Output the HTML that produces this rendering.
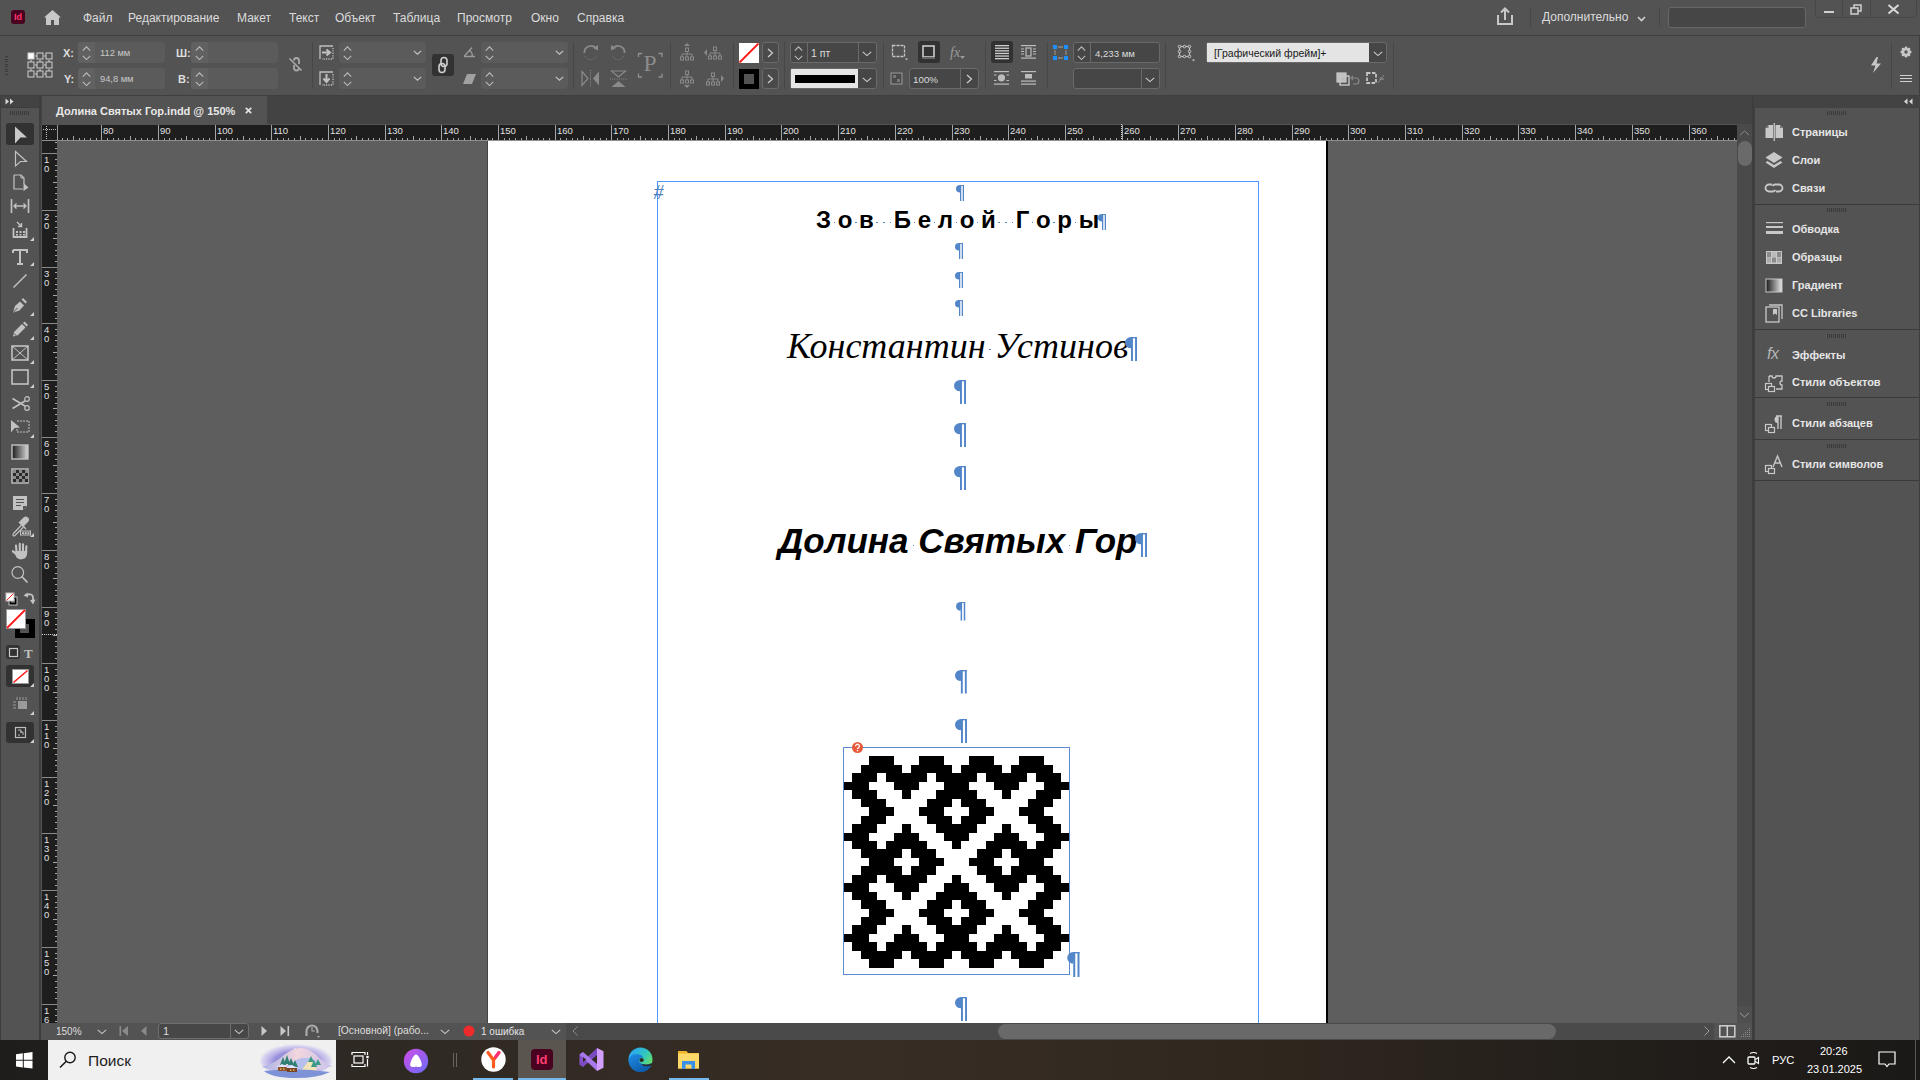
<!DOCTYPE html><html><head><meta charset="utf-8"><style>
*{box-sizing:border-box}
html,body{margin:0;padding:0}
body{width:1920px;height:1080px;overflow:hidden;position:relative;background:#535353;font-family:"Liberation Sans",sans-serif;color:#d6d6d6}
.a{position:absolute}
.t{position:absolute;white-space:nowrap;line-height:1}
svg{position:absolute;overflow:visible}
</style></head><body><div class="a" style="left:0px;top:0px;width:1920px;height:35px;background:#535353"></div><div class="a" style="left:0px;top:35px;width:1920px;height:1px;background:#3f3f3f"></div><div class="a" style="left:0px;top:36px;width:1920px;height:59px;background:#535353"></div><div class="a" style="left:0px;top:95px;width:1920px;height:1px;background:#3f3f3f"></div><div class="a" style="left:0px;top:96px;width:41px;height:944px;background:#3e3e3e"></div><div class="a" style="left:1px;top:96px;width:38px;height:11px;background:#434343"></div><div class="a" style="left:1px;top:108px;width:38px;height:932px;background:#535353"></div><div class="a" style="left:41px;top:96px;width:1713px;height:28px;background:#434343"></div><div class="a" style="left:42px;top:96px;width:225px;height:28px;background:#535353"></div><div class="a" style="left:42px;top:125px;width:1695px;height:15px;background:#1e1e1e"></div><div class="a" style="left:42px;top:140px;width:15px;height:883px;background:#1e1e1e"></div><div class="a" style="left:57px;top:141px;width:1680px;height:882px;background:#5e5e5e"></div><div class="a" style="left:488px;top:140px;width:838px;height:883px;background:#ffffff"></div><div class="a" style="left:1326px;top:140px;width:2px;height:883px;background:#000"></div><div class="a" style="left:487px;top:140px;width:1px;height:883px;background:#444"></div><div class="a" style="left:1737px;top:124px;width:15px;height:899px;background:#4a4a4a"></div><div class="a" style="left:1738px;top:141px;width:14px;height:25px;background:#6a6a6a;border-radius:7px"></div><div class="a" style="left:42px;top:1023px;width:1710px;height:17px;background:#535353"></div><div class="a" style="left:566px;top:1023px;width:1149px;height:17px;background:#4a4a4a"></div><div class="a" style="left:998px;top:1024px;width:558px;height:15px;background:#696969;border-radius:8px"></div><div class="a" style="left:1752px;top:96px;width:168px;height:944px;background:#3e3e3e"></div><div class="a" style="left:1754px;top:96px;width:166px;height:12px;background:#434343"></div><div class="a" style="left:1755px;top:108px;width:164px;height:932px;background:#535353"></div><div class="a" style="left:0px;top:1040px;width:1920px;height:40px;background:linear-gradient(90deg,#1e1d1c 0%,#211f1d 3%,#2e2923 18%,#372d24 45%,#30281f 65%,#221e1a 85%,#1b1917 100%)"></div><div class="a" style="left:48px;top:1040px;width:288px;height:40px;background:#f0f0f0"></div><div class="a" style="left:11px;top:10px;width:14px;height:14px;background:#49021f;border-radius:3px"></div><div class="t" style="left:14px;top:12.58px;font-size:9px;color:#ff3a6e;font-weight:bold">Id</div><svg style="left:43px;top:9px;" width="19" height="17" viewBox="0 0 19 17"><path d="M9.5 1 L1 8.5 L3 8.5 L3 16 L8 16 L8 11 L11 11 L11 16 L16 16 L16 8.5 L18 8.5 Z" fill="#c8c8c8"/></svg><div class="t" style="left:83px;top:11.84px;font-size:12px;color:#dcdcdc;">Файл</div><div class="t" style="left:128px;top:11.84px;font-size:12px;color:#dcdcdc;">Редактирование</div><div class="t" style="left:237px;top:11.84px;font-size:12px;color:#dcdcdc;">Макет</div><div class="t" style="left:289px;top:11.84px;font-size:12px;color:#dcdcdc;">Текст</div><div class="t" style="left:335px;top:11.84px;font-size:12px;color:#dcdcdc;">Объект</div><div class="t" style="left:393px;top:11.84px;font-size:12px;color:#dcdcdc;">Таблица</div><div class="t" style="left:457px;top:11.84px;font-size:12px;color:#dcdcdc;">Просмотр</div><div class="t" style="left:531px;top:11.84px;font-size:12px;color:#dcdcdc;">Окно</div><div class="t" style="left:577px;top:11.84px;font-size:12px;color:#dcdcdc;">Справка</div><svg style="left:1496px;top:7px;" width="18" height="19" viewBox="0 0 18 19"><path d="M2 8 V17 H16 V8" fill="none" stroke="#c8c8c8" stroke-width="2"/><path d="M9 13 V2 M5 5.5 L9 1.5 L13 5.5" fill="none" stroke="#c8c8c8" stroke-width="2"/></svg><div class="a" style="left:1530px;top:7px;width:1px;height:20px;background:#474747"></div><div class="t" style="left:1542px;top:11.34px;font-size:12px;color:#dcdcdc;">Дополнительно</div><svg style="left:1637px;top:16px;" width="9" height="6" viewBox="0 0 9 6"><path d="M1 1 L4.5 4.5 L8 1" fill="none" stroke="#d0d0d0" stroke-width="1.6"/></svg><div class="a" style="left:1659px;top:7px;width:1px;height:20px;background:#474747"></div><div class="a" style="left:1668px;top:7px;width:138px;height:21px;background:#464646;border:1px solid #676767;border-radius:3px"></div><div class="a" style="left:1815px;top:-2px;width:102px;height:20px;border:1px solid #474747;border-radius:0 0 4px 4px"></div><div class="a" style="left:1842px;top:0px;width:1px;height:18px;background:#474747"></div><div class="a" style="left:1870px;top:0px;width:1px;height:18px;background:#474747"></div><div class="a" style="left:1824px;top:11px;width:10px;height:2px;background:#d0d0d0"></div><svg style="left:1850px;top:4px;" width="13" height="11" viewBox="0 0 13 11"><rect x="1" y="4" width="7" height="6" fill="none" stroke="#d0d0d0" stroke-width="1.5"/><path d="M4 4 V1 H11 V7 H8" fill="none" stroke="#d0d0d0" stroke-width="1.5"/></svg><svg style="left:1887px;top:4px;" width="13" height="10" viewBox="0 0 13 10"><path d="M1.5 1 L11.5 9.5 M11.5 1 L1.5 9.5" stroke="#d8d8d8" stroke-width="2"/></svg><div class="a" style="left:5px;top:56.0px;width:3px;height:1px;background:#3a3a3a"></div><div class="a" style="left:5px;top:58.5px;width:3px;height:1px;background:#3a3a3a"></div><div class="a" style="left:5px;top:61.0px;width:3px;height:1px;background:#3a3a3a"></div><div class="a" style="left:5px;top:63.5px;width:3px;height:1px;background:#3a3a3a"></div><div class="a" style="left:5px;top:66.0px;width:3px;height:1px;background:#3a3a3a"></div><div class="a" style="left:5px;top:68.5px;width:3px;height:1px;background:#3a3a3a"></div><div class="a" style="left:5px;top:71.0px;width:3px;height:1px;background:#3a3a3a"></div><div class="a" style="left:5px;top:73.5px;width:3px;height:1px;background:#3a3a3a"></div><svg style="left:27px;top:52px;" width="28" height="27" viewBox="0 0 28 27"><rect x="1" y="1" width="6" height="6" fill="#ffffff" stroke="#d0d0d0" stroke-width="1"/><rect x="10" y="1" width="6" height="6" fill="none" stroke="#d0d0d0" stroke-width="1"/><rect x="19" y="1" width="6" height="6" fill="none" stroke="#d0d0d0" stroke-width="1"/><rect x="1" y="10" width="6" height="6" fill="none" stroke="#d0d0d0" stroke-width="1"/><rect x="10" y="10" width="6" height="6" fill="none" stroke="#d0d0d0" stroke-width="1"/><rect x="19" y="10" width="6" height="6" fill="none" stroke="#d0d0d0" stroke-width="1"/><rect x="1" y="19" width="6" height="6" fill="none" stroke="#d0d0d0" stroke-width="1"/><rect x="10" y="19" width="6" height="6" fill="none" stroke="#d0d0d0" stroke-width="1"/><rect x="19" y="19" width="6" height="6" fill="none" stroke="#d0d0d0" stroke-width="1"/><path d="M8 4 H10 M17 4 H19 M8 13 H10 M17 13 H19 M8 22 H10 M17 22 H19 M4 8 V10 M4 17 V19 M13 8 V10 M13 17 V19 M22 8 V10 M22 17 V19" stroke="#d0d0d0" stroke-width="1"/></svg><div class="t" style="left:63px;top:47.69px;font-size:11px;color:#dedede;font-weight:bold">X:</div><div class="t" style="left:64px;top:73.69px;font-size:11px;color:#dedede;font-weight:bold">Y:</div><div class="a" style="left:78px;top:42px;width:87px;height:21px;background:#5b5b5b;border-radius:3px"></div><div class="a" style="left:78px;top:42px;width:17px;height:21px;background:#616161;border-radius:3px 0 0 3px"></div><svg style="left:82px;top:45.5px;" width="9" height="6" viewBox="0 0 9 6"><path d="M0.8 4.6 L4.5 0.8 L8.2 4.6" fill="none" stroke="#bdbdbd" stroke-width="1.05"/></svg><svg style="left:82px;top:54.5px;" width="9" height="6" viewBox="0 0 9 6"><path d="M0.8 0.8 L4.5 4.6 L8.2 0.8" fill="none" stroke="#bdbdbd" stroke-width="1.05"/></svg><div class="a" style="left:78px;top:68px;width:87px;height:21px;background:#5b5b5b;border-radius:3px"></div><div class="a" style="left:78px;top:68px;width:17px;height:21px;background:#616161;border-radius:3px 0 0 3px"></div><svg style="left:82px;top:71.5px;" width="9" height="6" viewBox="0 0 9 6"><path d="M0.8 4.6 L4.5 0.8 L8.2 4.6" fill="none" stroke="#bdbdbd" stroke-width="1.05"/></svg><svg style="left:82px;top:80.5px;" width="9" height="6" viewBox="0 0 9 6"><path d="M0.8 0.8 L4.5 4.6 L8.2 0.8" fill="none" stroke="#bdbdbd" stroke-width="1.05"/></svg><div class="t" style="left:100px;top:48.63px;font-size:9.3px;color:#c8c8c8;">112 мм</div><div class="t" style="left:100px;top:74.63px;font-size:9.3px;color:#c8c8c8;">94,8 мм</div><div class="t" style="left:176px;top:47.69px;font-size:11px;color:#dedede;font-weight:bold">Ш:</div><div class="t" style="left:178px;top:73.69px;font-size:11px;color:#dedede;font-weight:bold">В:</div><div class="a" style="left:191px;top:42px;width:87px;height:21px;background:#5b5b5b;border-radius:3px"></div><div class="a" style="left:191px;top:42px;width:17px;height:21px;background:#616161;border-radius:3px 0 0 3px"></div><svg style="left:195px;top:45.5px;" width="9" height="6" viewBox="0 0 9 6"><path d="M0.8 4.6 L4.5 0.8 L8.2 4.6" fill="none" stroke="#bdbdbd" stroke-width="1.05"/></svg><svg style="left:195px;top:54.5px;" width="9" height="6" viewBox="0 0 9 6"><path d="M0.8 0.8 L4.5 4.6 L8.2 0.8" fill="none" stroke="#bdbdbd" stroke-width="1.05"/></svg><div class="a" style="left:191px;top:68px;width:87px;height:21px;background:#5b5b5b;border-radius:3px"></div><div class="a" style="left:191px;top:68px;width:17px;height:21px;background:#616161;border-radius:3px 0 0 3px"></div><svg style="left:195px;top:71.5px;" width="9" height="6" viewBox="0 0 9 6"><path d="M0.8 4.6 L4.5 0.8 L8.2 4.6" fill="none" stroke="#bdbdbd" stroke-width="1.05"/></svg><svg style="left:195px;top:80.5px;" width="9" height="6" viewBox="0 0 9 6"><path d="M0.8 0.8 L4.5 4.6 L8.2 0.8" fill="none" stroke="#bdbdbd" stroke-width="1.05"/></svg><svg style="left:288px;top:57px;" width="15" height="15" viewBox="0 0 15 15"><path d="M6 3.5 a2.5 2.5 0 0 1 5 0 V7 M6 8 v3 a2.5 2.5 0 0 0 5 0" fill="none" stroke="#a8a8a8" stroke-width="1.8"/><path d="M1.5 1.5 L13.5 13.5" stroke="#a8a8a8" stroke-width="1.6"/></svg><div class="a" style="left:312px;top:42px;width:1px;height:47px;background:#474747"></div><svg style="left:319px;top:45px;" width="16" height="16" viewBox="0 0 16 16"><path d="M1 14 V1 H14" fill="none" stroke="#c0c0c0" stroke-width="1.3"/><path d="M14 3 V14 H3" fill="none" stroke="#c0c0c0" stroke-width="1.3" stroke-dasharray="1.2 1.2"/><path d="M3 7.5 H10 M7.5 4.5 L11 7.5 L7.5 10.5" fill="none" stroke="#c0c0c0" stroke-width="2"/></svg><svg style="left:319px;top:71px;" width="16" height="16" viewBox="0 0 16 16"><path d="M1 14 V1 H14" fill="none" stroke="#c0c0c0" stroke-width="1.3"/><path d="M14 3 V14 H3" fill="none" stroke="#c0c0c0" stroke-width="1.3" stroke-dasharray="1.2 1.2"/><path d="M7.5 3 V10.5 M4.5 7.5 L7.5 11 L10.5 7.5" fill="none" stroke="#c0c0c0" stroke-width="2"/></svg><div class="a" style="left:339px;top:42px;width:87px;height:21px;background:#5b5b5b;border-radius:3px"></div><svg style="left:343px;top:45.5px;" width="9" height="6" viewBox="0 0 9 6"><path d="M0.8 4.6 L4.5 0.8 L8.2 4.6" fill="none" stroke="#bdbdbd" stroke-width="1.05"/></svg><svg style="left:343px;top:54.5px;" width="9" height="6" viewBox="0 0 9 6"><path d="M0.8 0.8 L4.5 4.6 L8.2 0.8" fill="none" stroke="#bdbdbd" stroke-width="1.05"/></svg><svg style="left:413px;top:50px;" width="9" height="5" viewBox="0 0 9 5"><path d="M0.8 0.8 L4.5 4.2 L8.2 0.8" fill="none" stroke="#c8c8c8" stroke-width="1.1"/></svg><div class="a" style="left:339px;top:68px;width:87px;height:21px;background:#5b5b5b;border-radius:3px"></div><svg style="left:343px;top:71.5px;" width="9" height="6" viewBox="0 0 9 6"><path d="M0.8 4.6 L4.5 0.8 L8.2 4.6" fill="none" stroke="#bdbdbd" stroke-width="1.05"/></svg><svg style="left:343px;top:80.5px;" width="9" height="6" viewBox="0 0 9 6"><path d="M0.8 0.8 L4.5 4.6 L8.2 0.8" fill="none" stroke="#bdbdbd" stroke-width="1.05"/></svg><svg style="left:413px;top:76px;" width="9" height="5" viewBox="0 0 9 5"><path d="M0.8 0.8 L4.5 4.2 L8.2 0.8" fill="none" stroke="#c8c8c8" stroke-width="1.1"/></svg><div class="a" style="left:432px;top:54px;width:22px;height:22px;background:#323232;border-radius:3px"></div><svg style="left:437px;top:56px;" width="12" height="18" viewBox="0 0 12 18"><rect x="4" y="1.5" width="6" height="9" rx="3" fill="none" stroke="#cfcfcf" stroke-width="1.6"/><rect x="2" y="7.5" width="6" height="9" rx="3" fill="none" stroke="#cfcfcf" stroke-width="1.6"/></svg><svg style="left:463px;top:46px;" width="13" height="12" viewBox="0 0 13 12"><path d="M1 10.5 H12 M1 10.5 L9 1.5 M6 4.5 a5 5 0 0 1 3 6" fill="none" stroke="#9a9a9a" stroke-width="1.4"/></svg><svg style="left:463px;top:73px;" width="13" height="12" viewBox="0 0 13 12"><path d="M4 1 H13 L9 11 H0 Z" fill="#a0a0a0"/></svg><div class="a" style="left:481px;top:42px;width:87px;height:21px;background:#5b5b5b;border-radius:3px"></div><svg style="left:485px;top:45.5px;" width="9" height="6" viewBox="0 0 9 6"><path d="M0.8 4.6 L4.5 0.8 L8.2 4.6" fill="none" stroke="#bdbdbd" stroke-width="1.05"/></svg><svg style="left:485px;top:54.5px;" width="9" height="6" viewBox="0 0 9 6"><path d="M0.8 0.8 L4.5 4.6 L8.2 0.8" fill="none" stroke="#bdbdbd" stroke-width="1.05"/></svg><svg style="left:555px;top:50px;" width="9" height="5" viewBox="0 0 9 5"><path d="M0.8 0.8 L4.5 4.2 L8.2 0.8" fill="none" stroke="#c8c8c8" stroke-width="1.1"/></svg><div class="a" style="left:481px;top:68px;width:87px;height:21px;background:#5b5b5b;border-radius:3px"></div><svg style="left:485px;top:71.5px;" width="9" height="6" viewBox="0 0 9 6"><path d="M0.8 4.6 L4.5 0.8 L8.2 4.6" fill="none" stroke="#bdbdbd" stroke-width="1.05"/></svg><svg style="left:485px;top:80.5px;" width="9" height="6" viewBox="0 0 9 6"><path d="M0.8 0.8 L4.5 4.6 L8.2 0.8" fill="none" stroke="#bdbdbd" stroke-width="1.05"/></svg><svg style="left:555px;top:76px;" width="9" height="5" viewBox="0 0 9 5"><path d="M0.8 0.8 L4.5 4.2 L8.2 0.8" fill="none" stroke="#c8c8c8" stroke-width="1.1"/></svg><div class="a" style="left:573px;top:42px;width:1px;height:47px;background:#474747"></div><svg style="left:582px;top:43px;" width="18" height="18" viewBox="0 0 18 18"><path d="M2.5 10 A6.5 6.5 0 0 1 14.5 6" fill="none" stroke="#8a8a8a" stroke-width="1.8"/><path d="M11 5 L16 7.5 L16 2 Z" fill="#8a8a8a"/><path d="M3 13 A6.5 6.5 0 0 0 15 12" fill="none" stroke="#8a8a8a" stroke-width="1" stroke-dasharray="1 1.5"/></svg><svg style="left:609px;top:43px;" width="18" height="18" viewBox="0 0 18 18"><g transform="translate(18,0) scale(-1,1)"><path d="M2.5 10 A6.5 6.5 0 0 1 14.5 6" fill="none" stroke="#8a8a8a" stroke-width="1.8"/><path d="M11 5 L16 7.5 L16 2 Z" fill="#8a8a8a"/><path d="M3 13 A6.5 6.5 0 0 0 15 12" fill="none" stroke="#8a8a8a" stroke-width="1" stroke-dasharray="1 1.5"/></g></svg><svg style="left:581px;top:70px;" width="19" height="17" viewBox="0 0 19 17"><path d="M1 1.5 L7 8.5 L1 15.5 Z" fill="none" stroke="#8a8a8a" stroke-width="1.2"/><path d="M18 1.5 L12 8.5 L18 15.5 Z" fill="#8a8a8a"/><path d="M9.5 0 V17" stroke="#8a8a8a" stroke-width="1" stroke-dasharray="1 1.2"/></svg><svg style="left:610px;top:70px;" width="17" height="18" viewBox="0 0 17 18"><path d="M1.5 1 L8.5 7 L15.5 1 Z" fill="none" stroke="#8a8a8a" stroke-width="1.2"/><path d="M1.5 17 L8.5 11 L15.5 17 Z" fill="#8a8a8a"/><path d="M0 9 H17" stroke="#8a8a8a" stroke-width="1" stroke-dasharray="1 1.2"/></svg><svg style="left:637px;top:52px;" width="27" height="27" viewBox="0 0 27 27"><path d="M1.5 5 V1.5 H5 M21.5 1.5 H25 V5 M25 21.5 V25 H21.5 M5 25 H1.5 V21.5" fill="none" stroke="#909090" stroke-width="1.3"/></svg><div class="t" style="left:643.5px;top:52.32px;font-size:23.5px;color:#8c8c8c;font-family:'Liberation Serif',serif;">P</div><div class="a" style="left:670px;top:42px;width:1px;height:47px;background:#474747"></div><svg style="left:680px;top:47px;" width="20" height="20" viewBox="0 0 20 20"><path d="M4 -1 L10 -1 L7 -4 Z" fill="#8a8a8a"/><rect x="5.5" y="1" width="3" height="3.5" fill="none" stroke="#8a8a8a" stroke-width="1"/><path d="M7 4.5 V7 M2 10 V7 H12 V10 M7 7 V10" fill="none" stroke="#8a8a8a" stroke-width="1"/><rect x="0.5" y="10" width="3" height="3" fill="none" stroke="#8a8a8a"/><rect x="5.5" y="10" width="3" height="3" fill="none" stroke="#8a8a8a"/><rect x="10.5" y="10" width="3" height="3" fill="none" stroke="#8a8a8a"/></svg><svg style="left:708px;top:46px;" width="20" height="20" viewBox="0 0 20 20"><path d="M-1 3 L-1 10 L-4 6.5 Z" fill="#8a8a8a"/><rect x="5.5" y="1" width="3" height="3.5" fill="none" stroke="#8a8a8a" stroke-width="1"/><path d="M7 4.5 V7 M2 10 V7 H12 V10 M7 7 V10" fill="none" stroke="#8a8a8a" stroke-width="1"/><rect x="0.5" y="10" width="3" height="3" fill="none" stroke="#8a8a8a"/><rect x="5.5" y="10" width="3" height="3" fill="none" stroke="#8a8a8a"/><rect x="10.5" y="10" width="3" height="3" fill="none" stroke="#8a8a8a"/></svg><svg style="left:680px;top:70px;" width="20" height="20" viewBox="0 0 20 20"><path d="M4 15 L10 15 L7 18 Z" fill="#8a8a8a"/><rect x="5.5" y="1" width="3" height="3.5" fill="none" stroke="#8a8a8a" stroke-width="1"/><path d="M7 4.5 V7 M2 10 V7 H12 V10 M7 7 V10" fill="none" stroke="#8a8a8a" stroke-width="1"/><rect x="0.5" y="10" width="3" height="3" fill="none" stroke="#8a8a8a"/><rect x="5.5" y="10" width="3" height="3" fill="none" stroke="#8a8a8a"/><rect x="10.5" y="10" width="3" height="3" fill="none" stroke="#8a8a8a"/></svg><svg style="left:706px;top:72px;" width="20" height="20" viewBox="0 0 20 20"><path d="M15 3 L15 10 L18 6.5 Z" fill="#8a8a8a"/><rect x="5.5" y="1" width="3" height="3.5" fill="none" stroke="#8a8a8a" stroke-width="1"/><path d="M7 4.5 V7 M2 10 V7 H12 V10 M7 7 V10" fill="none" stroke="#8a8a8a" stroke-width="1"/><rect x="0.5" y="10" width="3" height="3" fill="none" stroke="#8a8a8a"/><rect x="5.5" y="10" width="3" height="3" fill="none" stroke="#8a8a8a"/><rect x="10.5" y="10" width="3" height="3" fill="none" stroke="#8a8a8a"/></svg><div class="a" style="left:733px;top:42px;width:1px;height:47px;background:#474747"></div><svg style="left:739px;top:43px;" width="20" height="20" viewBox="0 0 20 20"><rect x="0" y="0" width="20" height="20" fill="#fff"/><path d="M0.5 19.5 L19.5 0.5" stroke="#ff1a1a" stroke-width="1.8"/></svg><div class="a" style="left:762px;top:42px;width:17px;height:21px;background:#4a4a4a;border:1px solid #6a6a6a;border-radius:3px"></div><svg style="left:767px;top:48px;" width="7" height="10" viewBox="0 0 7 10"><path d="M1 1 L5.5 5 L1 9" fill="none" stroke="#d0d0d0" stroke-width="1.2"/></svg><div class="a" style="left:739px;top:69px;width:20px;height:20px;background:#000"></div><div class="a" style="left:744px;top:74px;width:10px;height:10px;background:#535353"></div><div class="a" style="left:762px;top:68px;width:17px;height:21px;background:#4a4a4a;border:1px solid #6a6a6a;border-radius:3px"></div><svg style="left:767px;top:74px;" width="7" height="10" viewBox="0 0 7 10"><path d="M1 1 L5.5 5 L1 9" fill="none" stroke="#d0d0d0" stroke-width="1.2"/></svg><div class="a" style="left:784px;top:42px;width:1px;height:47px;background:#474747"></div><div class="a" style="left:790px;top:42px;width:87px;height:21px;background:#464646;border:1px solid #6a6a6a;border-radius:3px"></div><div class="a" style="left:807px;top:42px;width:1px;height:21px;background:#6a6a6a"></div><div class="a" style="left:858px;top:42px;width:1px;height:21px;background:#6a6a6a"></div><svg style="left:794px;top:45.5px;" width="9" height="6" viewBox="0 0 9 6"><path d="M0.8 4.6 L4.5 0.8 L8.2 4.6" fill="none" stroke="#bdbdbd" stroke-width="1.05"/></svg><svg style="left:794px;top:54.5px;" width="9" height="6" viewBox="0 0 9 6"><path d="M0.8 0.8 L4.5 4.6 L8.2 0.8" fill="none" stroke="#bdbdbd" stroke-width="1.05"/></svg><div class="t" style="left:811px;top:48.11px;font-size:10.5px;color:#dcdcdc;">1 пт</div><svg style="left:862px;top:51px;" width="10" height="6" viewBox="0 0 10 6"><path d="M0.8 0.8 L5.0 4.6 L9.2 0.8" fill="none" stroke="#cfcfcf" stroke-width="1.05"/></svg><div class="a" style="left:790px;top:68px;width:87px;height:21px;background:#464646;border:1px solid #6a6a6a;border-radius:3px"></div><div class="a" style="left:791px;top:69px;width:67px;height:19px;background:#e5e5e5"></div><div class="a" style="left:795px;top:75px;width:60px;height:8px;background:#000"></div><svg style="left:862px;top:77px;" width="10" height="6" viewBox="0 0 10 6"><path d="M0.8 0.8 L5.0 4.6 L9.2 0.8" fill="none" stroke="#cfcfcf" stroke-width="1.05"/></svg><div class="a" style="left:883px;top:42px;width:1px;height:47px;background:#474747"></div><svg style="left:891px;top:44px;" width="18" height="17" viewBox="0 0 18 17"><rect x="1.5" y="1.5" width="12" height="11" fill="none" stroke="#c4c4c4" stroke-width="1.3" stroke-dasharray="3 1"/><path d="M14 14.5 L17 14.5 L15.5 16.5 Z" fill="#c4c4c4"/></svg><div class="a" style="left:918px;top:41px;width:22px;height:22px;background:#323232;border-radius:3px"></div><svg style="left:922px;top:45px;" width="14" height="15" viewBox="0 0 14 15"><rect x="1" y="1" width="11" height="11" fill="none" stroke="#cccccc" stroke-width="1.6"/><rect x="0" y="12" width="13" height="2" fill="#666"/></svg><div class="t" style="left:950px;top:46.27px;font-size:14px;color:#9c9c9c;font-family:'Liberation Serif',serif;"><i>fx</i></div><svg style="left:960px;top:56px;" width="6" height="5" viewBox="0 0 6 5"><path d="M0 0 L5 0 L2.5 3 Z" fill="#9c9c9c"/></svg><svg style="left:890px;top:72px;" width="14" height="13" viewBox="0 0 14 13"><rect x="1" y="1" width="11" height="11" fill="#4a4a4a" stroke="#9a9a9a" stroke-width="1"/><rect x="3" y="3" width="3" height="3" fill="#777"/><rect x="7" y="7" width="3" height="3" fill="#777"/></svg><div class="a" style="left:909px;top:68px;width:70px;height:21px;background:#464646;border:1px solid #6a6a6a;border-radius:3px"></div><div class="a" style="left:960px;top:68px;width:1px;height:21px;background:#6a6a6a"></div><div class="t" style="left:913px;top:74.70px;font-size:9.8px;color:#dcdcdc;">100%</div><svg style="left:966px;top:74px;" width="7" height="10" viewBox="0 0 7 10"><path d="M1 1 L5.5 5 L1 9" fill="none" stroke="#d0d0d0" stroke-width="1.2"/></svg><div class="a" style="left:985px;top:42px;width:1px;height:47px;background:#474747"></div><div class="a" style="left:991px;top:41px;width:22px;height:22px;background:#323232;border-radius:3px"></div><svg style="left:995px;top:45px;" width="15" height="14" viewBox="0 0 15 14"><rect x="0" y="0" width="14" height="1.3" fill="#cfcfcf"/><rect x="0" y="2.6" width="14" height="1.3" fill="#cfcfcf"/><rect x="0" y="5.2" width="14" height="1.3" fill="#cfcfcf"/><rect x="0" y="7.8" width="14" height="1.3" fill="#cfcfcf"/><rect x="0" y="10.4" width="14" height="1.3" fill="#cfcfcf"/><rect x="0" y="13" width="14" height="1.3" fill="#cfcfcf"/></svg><svg style="left:1021px;top:45px;" width="16" height="14" viewBox="0 0 16 14"><rect x="0" y="0" width="15" height="1.2" fill="#bdbdbd"/><rect x="0" y="12.5" width="15" height="1.2" fill="#bdbdbd"/><rect x="5" y="3" width="5" height="8" fill="none" stroke="#bdbdbd" stroke-width="1.2"/><path d="M0 4 H3 M0 6.5 H3 M0 9 H3 M12 4 H15 M12 6.5 H15 M12 9 H15" stroke="#bdbdbd" stroke-width="1.1"/></svg><svg style="left:994px;top:71px;" width="16" height="14" viewBox="0 0 16 14"><rect x="0" y="0" width="15" height="1.2" fill="#bdbdbd"/><rect x="0" y="12.5" width="15" height="1.2" fill="#bdbdbd"/><circle cx="7.5" cy="6.8" r="3.6" fill="#bdbdbd"/><path d="M0 4 H2.5 M0 9.5 H2.5 M12.5 4 H15 M12.5 9.5 H15" stroke="#bdbdbd" stroke-width="1.1"/></svg><svg style="left:1021px;top:71px;" width="16" height="14" viewBox="0 0 16 14"><rect x="0" y="0" width="15" height="1.2" fill="#bdbdbd"/><rect x="0" y="9.5" width="15" height="1.2" fill="#bdbdbd"/><rect x="0" y="12.5" width="15" height="1.2" fill="#bdbdbd"/><rect x="4" y="3" width="7" height="4.5" fill="#bdbdbd"/></svg><div class="a" style="left:1047px;top:42px;width:1px;height:47px;background:#474747"></div><svg style="left:1053px;top:45px;" width="16" height="16" viewBox="0 0 16 16"><rect x="0" y="0" width="4" height="4" fill="#1e90ff"/><rect x="11" y="0" width="4" height="4" fill="#1e90ff"/><rect x="0" y="11" width="4" height="4" fill="#1e90ff"/><rect x="11" y="11" width="4" height="4" fill="#1e90ff"/><path d="M5 2 H10 M5 13 H10 M2 5 V10 M13 5 V10" stroke="#8a8a8a" stroke-width="1.3"/></svg><div class="a" style="left:1073px;top:42px;width:87px;height:21px;background:#464646;border:1px solid #6a6a6a;border-radius:3px"></div><div class="a" style="left:1090px;top:42px;width:1px;height:21px;background:#6a6a6a"></div><svg style="left:1077px;top:45.5px;" width="9" height="6" viewBox="0 0 9 6"><path d="M0.8 4.6 L4.5 0.8 L8.2 4.6" fill="none" stroke="#bdbdbd" stroke-width="1.05"/></svg><svg style="left:1077px;top:54.5px;" width="9" height="6" viewBox="0 0 9 6"><path d="M0.8 0.8 L4.5 4.6 L8.2 0.8" fill="none" stroke="#bdbdbd" stroke-width="1.05"/></svg><div class="t" style="left:1095px;top:48.87px;font-size:9.6px;color:#dcdcdc;">4,233 мм</div><div class="a" style="left:1073px;top:68px;width:87px;height:21px;background:#464646;border:1px solid #6a6a6a;border-radius:3px"></div><div class="a" style="left:1141px;top:68px;width:1px;height:21px;background:#6a6a6a"></div><svg style="left:1145px;top:77px;" width="10" height="6" viewBox="0 0 10 6"><path d="M0.8 0.8 L5.0 4.6 L9.2 0.8" fill="none" stroke="#cfcfcf" stroke-width="1.05"/></svg><div class="a" style="left:1165px;top:42px;width:1px;height:47px;background:#474747"></div><svg style="left:1178px;top:45px;" width="19" height="17" viewBox="0 0 19 17"><rect x="1.5" y="1.5" width="10" height="10" fill="none" stroke="#c4c4c4" stroke-width="1.2"/><circle cx="1.5" cy="1.5" r="1.3" fill="#535353" stroke="#c4c4c4"/><circle cx="6.5" cy="1.5" r="1.3" fill="#535353" stroke="#c4c4c4"/><circle cx="11.5" cy="1.5" r="1.3" fill="#535353" stroke="#c4c4c4"/><circle cx="1.5" cy="11.5" r="1.3" fill="#535353" stroke="#c4c4c4"/><circle cx="6.5" cy="11.5" r="1.3" fill="#535353" stroke="#c4c4c4"/><circle cx="11.5" cy="11.5" r="1.3" fill="#535353" stroke="#c4c4c4"/><circle cx="1.5" cy="6.5" r="1.3" fill="#535353" stroke="#c4c4c4"/><circle cx="11.5" cy="6.5" r="1.3" fill="#535353" stroke="#c4c4c4"/><path d="M14 14.5 L17 14.5 L15.5 16.5 Z" fill="#c4c4c4"/></svg><div class="a" style="left:1206px;top:42px;width:181px;height:21px;background:#464646;border:1px solid #6a6a6a;border-radius:3px"></div><div class="a" style="left:1207px;top:43px;width:162px;height:19px;background:#e4e4e4"></div><div class="t" style="left:1214px;top:48.11px;font-size:10.5px;color:#1a1a1a;">[Графический фрейм]+</div><svg style="left:1373px;top:51px;" width="10" height="6" viewBox="0 0 10 6"><path d="M0.8 0.8 L5.0 4.6 L9.2 0.8" fill="none" stroke="#cfcfcf" stroke-width="1.05"/></svg><svg style="left:1336px;top:72px;" width="24" height="15" viewBox="0 0 24 15"><rect x="1" y="1" width="9" height="9" fill="#bdbdbd" stroke="#c8c8c8" stroke-width="1.2"/><rect x="4" y="4" width="9" height="9" fill="none" stroke="#c8c8c8" stroke-width="1.4"/><path d="M16 6 H20 a3 3 0 0 1 0 6 H17 M17 4 L15 6 L17 8" fill="none" stroke="#8a8a8a" stroke-width="1.1"/></svg><svg style="left:1366px;top:72px;" width="20" height="15" viewBox="0 0 20 15"><rect x="1" y="1" width="9" height="10" fill="none" stroke="#c4c4c4" stroke-width="1.8" stroke-dasharray="3.5 1.5"/><path d="M12 11 L18 3 M14 5 L17 8 M13 7 L18 7" stroke="#8a8a8a" stroke-width="1"/></svg><div class="a" style="left:1393px;top:42px;width:1px;height:47px;background:#474747"></div><svg style="left:1870px;top:56px;" width="12" height="18" viewBox="0 0 12 18"><path d="M6.5 1 L1 9.5 H5.5 L3 17 L11 7.5 H6.5 L8 1 Z" fill="#c8c8c8"/></svg><div class="a" style="left:1891px;top:42px;width:1px;height:47px;background:#474747"></div><svg style="left:1900px;top:46px;" width="12" height="12" viewBox="0 0 12 12"><circle cx="6" cy="6" r="4" fill="#c8c8c8"/><circle cx="10.20" cy="6.00" r="1.4" fill="#c8c8c8"/><circle cx="8.97" cy="8.97" r="1.4" fill="#c8c8c8"/><circle cx="6.00" cy="10.20" r="1.4" fill="#c8c8c8"/><circle cx="3.03" cy="8.97" r="1.4" fill="#c8c8c8"/><circle cx="1.80" cy="6.00" r="1.4" fill="#c8c8c8"/><circle cx="3.03" cy="3.03" r="1.4" fill="#c8c8c8"/><circle cx="6.00" cy="1.80" r="1.4" fill="#c8c8c8"/><circle cx="8.97" cy="3.03" r="1.4" fill="#c8c8c8"/><circle cx="6" cy="6" r="1.7" fill="#535353"/></svg><svg style="left:1900px;top:74px;" width="13" height="9" viewBox="0 0 13 9"><path d="M0 1.5 H12 M0 4.5 H12 M0 7.5 H12" stroke="#d0d0d0" stroke-width="1.1"/></svg><div class="a" style="left:1919px;top:36px;width:1px;height:59px;background:#3f3f3f"></div><svg style="left:5px;top:98px;" width="10" height="7" viewBox="0 0 10 7"><path d="M0.5 0.5 L4 3.5 L0.5 6.5 Z M5 0.5 L8.5 3.5 L5 6.5 Z" fill="#d8d8d8"/></svg><div class="a" style="left:10px;top:111px;width:1px;height:4px;background:#3a3a3a"></div><div class="a" style="left:12px;top:111px;width:1px;height:4px;background:#3a3a3a"></div><div class="a" style="left:14px;top:111px;width:1px;height:4px;background:#3a3a3a"></div><div class="a" style="left:16px;top:111px;width:1px;height:4px;background:#3a3a3a"></div><div class="a" style="left:18px;top:111px;width:1px;height:4px;background:#3a3a3a"></div><div class="a" style="left:20px;top:111px;width:1px;height:4px;background:#3a3a3a"></div><div class="a" style="left:22px;top:111px;width:1px;height:4px;background:#3a3a3a"></div><div class="a" style="left:24px;top:111px;width:1px;height:4px;background:#3a3a3a"></div><div class="a" style="left:26px;top:111px;width:1px;height:4px;background:#3a3a3a"></div><div class="a" style="left:28px;top:111px;width:1px;height:4px;background:#3a3a3a"></div><div class="a" style="left:6px;top:123px;width:28px;height:22px;background:#323232;border-radius:3px"></div><svg style="left:14px;top:126px;" width="14" height="18" viewBox="0 0 14 18"><path d="M1 0.5 L13 11.5 L6.5 11.5 L1 17.5 Z" fill="#c8c8c8"/></svg><svg style="left:14px;top:150px;" width="14" height="18" viewBox="0 0 14 18"><path d="M1.5 1.5 L12.5 11.5 L6.5 11.5 L1.5 16 Z" fill="none" stroke="#c2c2c2" stroke-width="1.2"/></svg><svg style="left:13px;top:174px;" width="16" height="17" viewBox="0 0 16 17"><path d="M1 1 H8 L11 4 V10 M1 1 V15 H10" fill="none" stroke="#c2c2c2" stroke-width="1.2"/><path d="M8 1 V4 H11" fill="none" stroke="#c2c2c2" stroke-width="1"/><path d="M10.5 9 L15.5 13.5 L10.5 17 Z" fill="#c2c2c2"/></svg><svg style="left:10px;top:199px;" width="20" height="15" viewBox="0 0 20 15"><path d="M1.5 0 V14 M18.5 0 V14" stroke="#c2c2c2" stroke-width="1.6"/><path d="M4 7 H16 M6.5 4.5 L4 7 L6.5 9.5 M13.5 4.5 L16 7 L13.5 9.5" fill="none" stroke="#c2c2c2" stroke-width="1.4"/></svg><svg style="left:12px;top:221px;" width="16" height="18" viewBox="0 0 16 18"><path d="M1.5 7 V16 H14.5 V7" fill="none" stroke="#c2c2c2" stroke-width="1.8"/><rect x="4" y="10" width="2" height="2" fill="#c2c2c2"/><rect x="7.5" y="10" width="2" height="2" fill="#c2c2c2"/><rect x="11" y="10" width="2" height="2" fill="#c2c2c2"/><rect x="4" y="13" width="2" height="1.5" fill="#c2c2c2"/><rect x="7.5" y="13" width="2" height="1.5" fill="#c2c2c2"/><rect x="11" y="13" width="2" height="1.5" fill="#c2c2c2"/><path d="M5 1 L9.5 5.5 M9.5 2 V5.5 H6" fill="none" stroke="#c2c2c2" stroke-width="1.4"/></svg><svg style="left:30px;top:237px;" width="4" height="4" viewBox="0 0 4 4"><path d="M4 0 L4 4 L0 4 Z" fill="#d0d0d0"/></svg><svg style="left:12px;top:249px;" width="16" height="16" viewBox="0 0 16 16"><path d="M1 1 H15 V4 M1 1 V4 M8 1 V15 M5 15 H11" fill="none" stroke="#c2c2c2" stroke-width="2"/></svg><svg style="left:30px;top:262px;" width="4" height="4" viewBox="0 0 4 4"><path d="M4 0 L4 4 L0 4 Z" fill="#d0d0d0"/></svg><svg style="left:12px;top:273px;" width="16" height="16" viewBox="0 0 16 16"><path d="M1.5 14.5 L14.5 1.5" stroke="#c2c2c2" stroke-width="1.4"/></svg><svg style="left:11px;top:297px;" width="18" height="17" viewBox="0 0 18 17"><path d="M2 15.5 L4 9 L9 4.5 L13 8.5 L8.5 13.5 Z" fill="#c2c2c2"/><path d="M10.5 2.5 L12 1 L16 5 L14.5 6.5 Z" fill="#c2c2c2"/><path d="M2.5 15 L6.5 11" stroke="#535353" stroke-width="1"/></svg><svg style="left:30px;top:312px;" width="4" height="4" viewBox="0 0 4 4"><path d="M4 0 L4 4 L0 4 Z" fill="#d0d0d0"/></svg><svg style="left:11px;top:321px;" width="18" height="17" viewBox="0 0 18 17"><path d="M2 15.5 L3 11 L11 3 L14.5 6.5 L6.5 14.5 Z" fill="#c2c2c2"/><path d="M12 2 L13.5 0.5 L17 4 L15.5 5.5 Z" fill="#c2c2c2"/><path d="M2.8 12.3 L5.5 15" stroke="#535353" stroke-width="1"/></svg><svg style="left:30px;top:336px;" width="4" height="4" viewBox="0 0 4 4"><path d="M4 0 L4 4 L0 4 Z" fill="#d0d0d0"/></svg><svg style="left:11px;top:345px;" width="18" height="16" viewBox="0 0 18 16"><rect x="1" y="1" width="16" height="14" fill="none" stroke="#c2c2c2" stroke-width="1.6"/><path d="M1 1 L17 15 M17 1 L1 15" stroke="#c2c2c2" stroke-width="1"/></svg><svg style="left:30px;top:360px;" width="4" height="4" viewBox="0 0 4 4"><path d="M4 0 L4 4 L0 4 Z" fill="#d0d0d0"/></svg><svg style="left:11px;top:369px;" width="18" height="16" viewBox="0 0 18 16"><rect x="1" y="1" width="16" height="14" fill="none" stroke="#c2c2c2" stroke-width="1.6"/></svg><svg style="left:30px;top:384px;" width="4" height="4" viewBox="0 0 4 4"><path d="M4 0 L4 4 L0 4 Z" fill="#d0d0d0"/></svg><svg style="left:11px;top:395px;" width="19" height="17" viewBox="0 0 19 17"><path d="M1.5 3.5 L14 11 M1.5 13.5 L14 6" stroke="#c2c2c2" stroke-width="1.6"/><circle cx="16" cy="4" r="2.3" fill="none" stroke="#c2c2c2" stroke-width="1.2"/><circle cx="16" cy="13" r="2.3" fill="none" stroke="#c2c2c2" stroke-width="1.2"/></svg><svg style="left:10px;top:419px;" width="24" height="18" viewBox="0 0 24 18"><path d="M1 1 L10 8.5 L4.5 9 L1 13.5 Z" fill="#c2c2c2"/><path d="M7 2 H19 V13 H7 V9" fill="none" stroke="#c2c2c2" stroke-width="1" stroke-dasharray="2 1"/></svg><svg style="left:30px;top:434px;" width="4" height="4" viewBox="0 0 4 4"><path d="M4 0 L4 4 L0 4 Z" fill="#d0d0d0"/></svg><svg style="left:11px;top:444px;" width="18" height="16" viewBox="0 0 18 16"><defs><linearGradient id="g1" x1="0" x2="1"><stop offset="0" stop-color="#1a1a1a"/><stop offset="1" stop-color="#d8d8d8"/></linearGradient></defs><rect x="1" y="1" width="16" height="14" fill="url(#g1)" stroke="#c2c2c2" stroke-width="1.4"/></svg><svg style="left:11px;top:468px;" width="18" height="16" viewBox="0 0 18 16"><rect x="1" y="1" width="16" height="14" fill="#3a3a3a" stroke="#c2c2c2" stroke-width="1.4"/><rect x="2" y="2" width="3" height="3" fill="#8a8a8a"/><rect x="5" y="2" width="3" height="3" fill="#2a2a2a"/><rect x="8" y="2" width="3" height="3" fill="#8a8a8a"/><rect x="11" y="2" width="3" height="3" fill="#2a2a2a"/><rect x="14" y="2" width="3" height="3" fill="#8a8a8a"/><rect x="2" y="5" width="3" height="3" fill="#2a2a2a"/><rect x="5" y="5" width="3" height="3" fill="#8a8a8a"/><rect x="8" y="5" width="3" height="3" fill="#2a2a2a"/><rect x="11" y="5" width="3" height="3" fill="#8a8a8a"/><rect x="14" y="5" width="3" height="3" fill="#2a2a2a"/><rect x="2" y="8" width="3" height="3" fill="#8a8a8a"/><rect x="5" y="8" width="3" height="3" fill="#2a2a2a"/><rect x="8" y="8" width="3" height="3" fill="#8a8a8a"/><rect x="11" y="8" width="3" height="3" fill="#2a2a2a"/><rect x="14" y="8" width="3" height="3" fill="#8a8a8a"/><rect x="2" y="11" width="3" height="3" fill="#2a2a2a"/><rect x="5" y="11" width="3" height="3" fill="#8a8a8a"/><rect x="8" y="11" width="3" height="3" fill="#2a2a2a"/><rect x="11" y="11" width="3" height="3" fill="#8a8a8a"/><rect x="14" y="11" width="3" height="3" fill="#2a2a2a"/></svg><svg style="left:12px;top:495px;" width="16" height="16" viewBox="0 0 16 16"><path d="M1 1 H15 V11 L11 15 H1 Z" fill="#c2c2c2"/><path d="M4 4.5 H12 M4 7.5 H12 M4 10.5 H9" stroke="#535353" stroke-width="1.2"/><path d="M11 15 V11 H15" fill="#535353"/></svg><svg style="left:11px;top:517px;" width="24" height="22" viewBox="0 0 24 22"><path d="M10.5 8 L2.5 16.5 Q1 18.5 3 19 L4 18.5 L12.5 10" fill="none" stroke="#c2c2c2" stroke-width="1.2"/><path d="M9 6 L15 12 M12 9 L16.5 4.5 a2.4 2.4 0 0 0 -3.5 -3.5 L8.5 5.5 Z" fill="#c2c2c2" stroke="#c2c2c2" stroke-width="1.4"/><rect x="9.5" y="14" width="10" height="4" fill="none" stroke="#c2c2c2" stroke-width="1"/><rect x="11" y="15.2" width="2" height="1.8" fill="#c2c2c2"/><rect x="13.7" y="15.2" width="2" height="1.8" fill="#c2c2c2"/><rect x="16.4" y="15.2" width="2" height="1.8" fill="#c2c2c2"/></svg><svg style="left:30px;top:533px;" width="4" height="4" viewBox="0 0 4 4"><path d="M4 0 L4 4 L0 4 Z" fill="#d0d0d0"/></svg><svg style="left:11px;top:542px;" width="18" height="18" viewBox="0 0 18 18"><path d="M5.5 10 L5 3.5 M8.8 9 V1.8 M12 9 V2.3 M15 10 L15.4 4.2" stroke="#c2c2c2" stroke-width="2.1" stroke-linecap="round"/><path d="M4.3 9 H16.3 Q16.3 15 13.5 16.6 Q12 17.4 9.5 17.4 Q7 17.4 5.6 15.6 L4.3 13 Z" fill="#c2c2c2"/><path d="M6.5 13 L2 9.3" stroke="#c2c2c2" stroke-width="2.3" stroke-linecap="round"/></svg><svg style="left:11px;top:566px;" width="18" height="18" viewBox="0 0 18 18"><circle cx="6.8" cy="6.5" r="5.8" fill="none" stroke="#c2c2c2" stroke-width="1.2"/><path d="M10.8 10.5 L16.5 16.5" stroke="#c2c2c2" stroke-width="1.8"/></svg><svg style="left:5px;top:592px;" width="13" height="14" viewBox="0 0 13 14"><rect x="4" y="5" width="8" height="8" fill="#000" stroke="#c2c2c2" stroke-width="1"/><rect x="6" y="7" width="4" height="4" fill="#535353"/><rect x="1" y="1" width="8" height="8" fill="#fff" stroke="#c2c2c2" stroke-width="1"/><path d="M1.5 8.5 L8.5 1.5" stroke="#f22" stroke-width="1"/></svg><svg style="left:23px;top:591px;" width="13" height="15" viewBox="0 0 13 15"><path d="M3.5 5 Q5 2.5 8 3.5 Q10.5 4.5 10 9" fill="none" stroke="#c2c2c2" stroke-width="1.8"/><path d="M0.5 4.5 L4.5 1.5 L5 6.5 Z M7 9 L10 13.5 L12.5 8.5 Z" fill="#c2c2c2"/></svg><div class="a" style="left:15px;top:619px;width:20px;height:19px;background:#000"></div><div class="a" style="left:20px;top:624px;width:9px;height:9px;background:#535353"></div><svg style="left:6px;top:609px;" width="20" height="20" viewBox="0 0 20 20"><rect x="0.5" y="0.5" width="19" height="19" fill="#fff" stroke="#9a9a9a" stroke-width="1"/><path d="M1 19 L19 1" stroke="#ff1a1a" stroke-width="1.8"/></svg><div class="a" style="left:6px;top:645px;width:14px;height:14px;background:#323232;border-radius:3px"></div><svg style="left:9px;top:648px;" width="9" height="9" viewBox="0 0 9 9"><rect x="0.5" y="0.5" width="8" height="8" fill="none" stroke="#c8c8c8" stroke-width="1.2"/></svg><div class="t" style="left:24px;top:647.11px;font-size:13px;color:#c2c2c2;font-family:'Liberation Serif',serif;font-weight:bold">T</div><div class="a" style="left:6px;top:665px;width:28px;height:22px;background:#323232;border-radius:3px"></div><svg style="left:12px;top:669px;" width="17" height="15" viewBox="0 0 17 15"><rect x="0.5" y="0.5" width="16" height="14" fill="#fff" stroke="#9a9a9a" stroke-width="1"/><path d="M1.5 13.5 L15.5 1.5" stroke="#ff1a1a" stroke-width="1.6"/></svg><svg style="left:30px;top:683px;" width="4" height="4" viewBox="0 0 4 4"><path d="M4 0 L4 4 L0 4 Z" fill="#d0d0d0"/></svg><svg style="left:13px;top:697px;" width="15" height="14" viewBox="0 0 15 14"><path d="M4 0 V3 M7 0 V3 M10 0 V3 M13 0 V3" stroke="#9a9a9a" stroke-width="1"/><rect x="5" y="4" width="9" height="8" fill="#9a9a9a"/><path d="M0 5 H3 M0 8 H3 M0 11 H3" stroke="#9a9a9a" stroke-width="1"/></svg><svg style="left:30px;top:711px;" width="4" height="4" viewBox="0 0 4 4"><path d="M4 0 L4 4 L0 4 Z" fill="#d0d0d0"/></svg><div class="a" style="left:6px;top:722px;width:28px;height:21px;background:#323232;border-radius:3px"></div><svg style="left:15px;top:727px;" width="11" height="11" viewBox="0 0 11 11"><rect x="0.5" y="0.5" width="10" height="10" fill="none" stroke="#bdbdbd" stroke-width="1.2"/><path d="M3 3 H6 V6 M5 5 H8 V8 M3 8 H5" fill="none" stroke="#bdbdbd" stroke-width="1"/></svg><svg style="left:30px;top:739px;" width="4" height="4" viewBox="0 0 4 4"><path d="M4 0 L4 4 L0 4 Z" fill="#d0d0d0"/></svg><div class="t" style="left:56px;top:105.69px;font-size:11px;color:#e8e8e8;font-weight:bold">Долина Святых Гор.indd @ 150%</div><svg style="left:245px;top:107px;" width="7" height="7" viewBox="0 0 7 7"><path d="M0.8 0.8 L6.2 6.2 M6.2 0.8 L0.8 6.2" stroke="#e0e0e0" stroke-width="1.8"/></svg><svg style="left:57px;top:124px;" width="1680" height="17" viewBox="0 0 1680 17"><path d="M5.5 14 V16 M10.5 14 V16 M16.5 12 V16 M22.5 14 V16 M27.5 14 V16 M33.5 14 V16 M39.5 14 V16 M44.5 1 V16 M50.5 14 V16 M56.5 14 V16 M61.5 14 V16 M67.5 14 V16 M73.5 12 V16 M78.5 14 V16 M84.5 14 V16 M90.5 14 V16 M95.5 14 V16 M101.5 1 V16 M107.5 14 V16 M112.5 14 V16 M118.5 14 V16 M124.5 14 V16 M129.5 12 V16 M135.5 14 V16 M141.5 14 V16 M146.5 14 V16 M152.5 14 V16 M158.5 1 V16 M163.5 14 V16 M169.5 14 V16 M175.5 14 V16 M180.5 14 V16 M186.5 12 V16 M192.5 14 V16 M197.5 14 V16 M203.5 14 V16 M209.5 14 V16 M214.5 1 V16 M220.5 14 V16 M226.5 14 V16 M231.5 14 V16 M237.5 14 V16 M243.5 12 V16 M248.5 14 V16 M254.5 14 V16 M260.5 14 V16 M265.5 14 V16 M271.5 1 V16 M277.5 14 V16 M282.5 14 V16 M288.5 14 V16 M294.5 14 V16 M299.5 12 V16 M305.5 14 V16 M311.5 14 V16 M316.5 14 V16 M322.5 14 V16 M328.5 1 V16 M333.5 14 V16 M339.5 14 V16 M345.5 14 V16 M350.5 14 V16 M356.5 12 V16 M362.5 14 V16 M367.5 14 V16 M373.5 14 V16 M379.5 14 V16 M384.5 1 V16 M390.5 14 V16 M396.5 14 V16 M401.5 14 V16 M407.5 14 V16 M413.5 12 V16 M418.5 14 V16 M424.5 14 V16 M430.5 14 V16 M435.5 14 V16 M441.5 1 V16 M447.5 14 V16 M452.5 14 V16 M458.5 14 V16 M464.5 14 V16 M469.5 12 V16 M475.5 14 V16 M481.5 14 V16 M486.5 14 V16 M492.5 14 V16 M498.5 1 V16 M503.5 14 V16 M509.5 14 V16 M515.5 14 V16 M520.5 14 V16 M526.5 12 V16 M532.5 14 V16 M537.5 14 V16 M543.5 14 V16 M549.5 14 V16 M554.5 1 V16 M560.5 14 V16 M566.5 14 V16 M571.5 14 V16 M577.5 14 V16 M583.5 12 V16 M588.5 14 V16 M594.5 14 V16 M600.5 14 V16 M605.5 14 V16 M611.5 1 V16 M617.5 14 V16 M622.5 14 V16 M628.5 14 V16 M634.5 14 V16 M639.5 12 V16 M645.5 14 V16 M651.5 14 V16 M656.5 14 V16 M662.5 14 V16 M668.5 1 V16 M673.5 14 V16 M679.5 14 V16 M685.5 14 V16 M690.5 14 V16 M696.5 12 V16 M702.5 14 V16 M707.5 14 V16 M713.5 14 V16 M719.5 14 V16 M724.5 1 V16 M730.5 14 V16 M736.5 14 V16 M741.5 14 V16 M747.5 14 V16 M753.5 12 V16 M758.5 14 V16 M764.5 14 V16 M770.5 14 V16 M776.5 14 V16 M781.5 1 V16 M787.5 14 V16 M793.5 14 V16 M798.5 14 V16 M804.5 14 V16 M810.5 12 V16 M815.5 14 V16 M821.5 14 V16 M827.5 14 V16 M832.5 14 V16 M838.5 1 V16 M844.5 14 V16 M849.5 14 V16 M855.5 14 V16 M861.5 14 V16 M866.5 12 V16 M872.5 14 V16 M878.5 14 V16 M883.5 14 V16 M889.5 14 V16 M895.5 1 V16 M900.5 14 V16 M906.5 14 V16 M912.5 14 V16 M917.5 14 V16 M923.5 12 V16 M929.5 14 V16 M934.5 14 V16 M940.5 14 V16 M946.5 14 V16 M951.5 1 V16 M957.5 14 V16 M963.5 14 V16 M968.5 14 V16 M974.5 14 V16 M980.5 12 V16 M985.5 14 V16 M991.5 14 V16 M997.5 14 V16 M1002.5 14 V16 M1008.5 1 V16 M1014.5 14 V16 M1019.5 14 V16 M1025.5 14 V16 M1031.5 14 V16 M1036.5 12 V16 M1042.5 14 V16 M1048.5 14 V16 M1053.5 14 V16 M1059.5 14 V16 M1065.5 1 V16 M1070.5 14 V16 M1076.5 14 V16 M1082.5 14 V16 M1087.5 14 V16 M1093.5 12 V16 M1099.5 14 V16 M1104.5 14 V16 M1110.5 14 V16 M1116.5 14 V16 M1121.5 1 V16 M1127.5 14 V16 M1133.5 14 V16 M1138.5 14 V16 M1144.5 14 V16 M1150.5 12 V16 M1155.5 14 V16 M1161.5 14 V16 M1167.5 14 V16 M1172.5 14 V16 M1178.5 1 V16 M1184.5 14 V16 M1189.5 14 V16 M1195.5 14 V16 M1201.5 14 V16 M1206.5 12 V16 M1212.5 14 V16 M1218.5 14 V16 M1223.5 14 V16 M1229.5 14 V16 M1235.5 1 V16 M1240.5 14 V16 M1246.5 14 V16 M1252.5 14 V16 M1257.5 14 V16 M1263.5 12 V16 M1269.5 14 V16 M1274.5 14 V16 M1280.5 14 V16 M1286.5 14 V16 M1291.5 1 V16 M1297.5 14 V16 M1303.5 14 V16 M1308.5 14 V16 M1314.5 14 V16 M1320.5 12 V16 M1325.5 14 V16 M1331.5 14 V16 M1337.5 14 V16 M1342.5 14 V16 M1348.5 1 V16 M1354.5 14 V16 M1359.5 14 V16 M1365.5 14 V16 M1371.5 14 V16 M1376.5 12 V16 M1382.5 14 V16 M1388.5 14 V16 M1393.5 14 V16 M1399.5 14 V16 M1405.5 1 V16 M1410.5 14 V16 M1416.5 14 V16 M1422.5 14 V16 M1427.5 14 V16 M1433.5 12 V16 M1439.5 14 V16 M1444.5 14 V16 M1450.5 14 V16 M1456.5 14 V16 M1461.5 1 V16 M1467.5 14 V16 M1473.5 14 V16 M1478.5 14 V16 M1484.5 14 V16 M1490.5 12 V16 M1495.5 14 V16 M1501.5 14 V16 M1507.5 14 V16 M1512.5 14 V16 M1518.5 1 V16 M1524.5 14 V16 M1529.5 14 V16 M1535.5 14 V16 M1541.5 14 V16 M1546.5 12 V16 M1552.5 14 V16 M1558.5 14 V16 M1563.5 14 V16 M1569.5 14 V16 M1575.5 1 V16 M1580.5 14 V16 M1586.5 14 V16 M1592.5 14 V16 M1598.5 14 V16 M1603.5 12 V16 M1609.5 14 V16 M1615.5 14 V16 M1620.5 14 V16 M1626.5 14 V16 M1632.5 1 V16 M1637.5 14 V16 M1643.5 14 V16 M1649.5 14 V16 M1654.5 14 V16 M1660.5 12 V16 M1666.5 14 V16 M1671.5 14 V16 M1677.5 14 V16" stroke="#a6a6a6" stroke-width="1"/></svg><div class="a" style="left:42px;top:140px;width:1695px;height:1px;background:#8f8f8f"></div><div class="a" style="left:57px;top:125px;width:1px;height:15px;background:#9a9a9a"></div><div class="t" style="left:103px;top:125.96px;font-size:9.5px;color:#e0e0e0;">80</div><div class="t" style="left:160px;top:125.96px;font-size:9.5px;color:#e0e0e0;">90</div><div class="t" style="left:217px;top:125.96px;font-size:9.5px;color:#e0e0e0;">100</div><div class="t" style="left:273px;top:125.96px;font-size:9.5px;color:#e0e0e0;">110</div><div class="t" style="left:330px;top:125.96px;font-size:9.5px;color:#e0e0e0;">120</div><div class="t" style="left:387px;top:125.96px;font-size:9.5px;color:#e0e0e0;">130</div><div class="t" style="left:443px;top:125.96px;font-size:9.5px;color:#e0e0e0;">140</div><div class="t" style="left:500px;top:125.96px;font-size:9.5px;color:#e0e0e0;">150</div><div class="t" style="left:557px;top:125.96px;font-size:9.5px;color:#e0e0e0;">160</div><div class="t" style="left:613px;top:125.96px;font-size:9.5px;color:#e0e0e0;">170</div><div class="t" style="left:670px;top:125.96px;font-size:9.5px;color:#e0e0e0;">180</div><div class="t" style="left:727px;top:125.96px;font-size:9.5px;color:#e0e0e0;">190</div><div class="t" style="left:783px;top:125.96px;font-size:9.5px;color:#e0e0e0;">200</div><div class="t" style="left:840px;top:125.96px;font-size:9.5px;color:#e0e0e0;">210</div><div class="t" style="left:897px;top:125.96px;font-size:9.5px;color:#e0e0e0;">220</div><div class="t" style="left:954px;top:125.96px;font-size:9.5px;color:#e0e0e0;">230</div><div class="t" style="left:1010px;top:125.96px;font-size:9.5px;color:#e0e0e0;">240</div><div class="t" style="left:1067px;top:125.96px;font-size:9.5px;color:#e0e0e0;">250</div><div class="t" style="left:1124px;top:125.96px;font-size:9.5px;color:#e0e0e0;">260</div><div class="t" style="left:1180px;top:125.96px;font-size:9.5px;color:#e0e0e0;">270</div><div class="t" style="left:1237px;top:125.96px;font-size:9.5px;color:#e0e0e0;">280</div><div class="t" style="left:1294px;top:125.96px;font-size:9.5px;color:#e0e0e0;">290</div><div class="t" style="left:1350px;top:125.96px;font-size:9.5px;color:#e0e0e0;">300</div><div class="t" style="left:1407px;top:125.96px;font-size:9.5px;color:#e0e0e0;">310</div><div class="t" style="left:1464px;top:125.96px;font-size:9.5px;color:#e0e0e0;">320</div><div class="t" style="left:1520px;top:125.96px;font-size:9.5px;color:#e0e0e0;">330</div><div class="t" style="left:1577px;top:125.96px;font-size:9.5px;color:#e0e0e0;">340</div><div class="t" style="left:1634px;top:125.96px;font-size:9.5px;color:#e0e0e0;">350</div><div class="t" style="left:1691px;top:125.96px;font-size:9.5px;color:#e0e0e0;">360</div><svg style="left:1121px;top:124px;" width="2" height="16" viewBox="0 0 2 16"><path d="M0.5 0 V16" stroke="#d8d8d8" stroke-width="1" stroke-dasharray="1 1"/></svg><svg style="left:42px;top:124px;" width="15" height="16" viewBox="0 0 15 16"><rect x="4" y="2" width="1" height="1" fill="#c0c0c0"/><rect x="4" y="8" width="1" height="1" fill="#c0c0c0"/><rect x="4" y="10" width="1" height="1" fill="#c0c0c0"/><rect x="4" y="12" width="1" height="1" fill="#c0c0c0"/><rect x="4" y="14" width="1" height="1" fill="#c0c0c0"/><rect x="1" y="5" width="1" height="1" fill="#c0c0c0"/><rect x="7" y="5" width="1" height="1" fill="#c0c0c0"/><rect x="9" y="5" width="1" height="1" fill="#c0c0c0"/><rect x="11" y="5" width="1" height="1" fill="#c0c0c0"/><rect x="13" y="5" width="1" height="1" fill="#c0c0c0"/><rect x="4" y="4" width="1" height="1" fill="#c0c0c0"/><rect x="3" y="5" width="1" height="1" fill="#c0c0c0"/><rect x="5" y="5" width="1" height="1" fill="#c0c0c0"/><rect x="4" y="6" width="1" height="1" fill="#c0c0c0"/></svg><svg style="left:42px;top:141px;" width="15" height="882" viewBox="0 0 15 882"><path d="M13 1.5 H15 M13 7.5 H15 M13 18.5 H15 M13 24.5 H15 M13 29.5 H15 M13 35.5 H15 M11 41.5 H15 M13 46.5 H15 M13 52.5 H15 M13 58.5 H15 M13 63.5 H15 M13 75.5 H15 M13 80.5 H15 M13 86.5 H15 M13 92.5 H15 M11 97.5 H15 M13 103.5 H15 M13 109.5 H15 M13 114.5 H15 M13 120.5 H15 M13 131.5 H15 M13 137.5 H15 M13 143.5 H15 M13 148.5 H15 M11 154.5 H15 M13 160.5 H15 M13 165.5 H15 M13 171.5 H15 M13 177.5 H15 M13 188.5 H15 M13 194.5 H15 M13 199.5 H15 M13 205.5 H15 M11 211.5 H15 M13 216.5 H15 M13 222.5 H15 M13 228.5 H15 M13 233.5 H15 M13 245.5 H15 M13 250.5 H15 M13 256.5 H15 M13 262.5 H15 M11 267.5 H15 M13 273.5 H15 M13 279.5 H15 M13 284.5 H15 M13 290.5 H15 M13 301.5 H15 M13 307.5 H15 M13 313.5 H15 M13 318.5 H15 M11 324.5 H15 M13 330.5 H15 M13 335.5 H15 M13 341.5 H15 M13 347.5 H15 M13 358.5 H15 M13 364.5 H15 M13 369.5 H15 M13 375.5 H15 M11 381.5 H15 M13 386.5 H15 M13 392.5 H15 M13 398.5 H15 M13 403.5 H15 M13 415.5 H15 M13 420.5 H15 M13 426.5 H15 M13 432.5 H15 M11 437.5 H15 M13 443.5 H15 M13 449.5 H15 M13 454.5 H15 M13 460.5 H15 M13 471.5 H15 M13 477.5 H15 M13 483.5 H15 M13 488.5 H15 M11 494.5 H15 M13 500.5 H15 M13 505.5 H15 M13 511.5 H15 M13 517.5 H15 M13 528.5 H15 M13 534.5 H15 M13 539.5 H15 M13 545.5 H15 M11 551.5 H15 M13 556.5 H15 M13 562.5 H15 M13 568.5 H15 M13 573.5 H15 M13 585.5 H15 M13 590.5 H15 M13 596.5 H15 M13 602.5 H15 M11 607.5 H15 M13 613.5 H15 M13 619.5 H15 M13 624.5 H15 M13 630.5 H15 M13 641.5 H15 M13 647.5 H15 M13 653.5 H15 M13 658.5 H15 M11 664.5 H15 M13 670.5 H15 M13 675.5 H15 M13 681.5 H15 M13 687.5 H15 M13 698.5 H15 M13 704.5 H15 M13 709.5 H15 M13 715.5 H15 M11 721.5 H15 M13 726.5 H15 M13 732.5 H15 M13 738.5 H15 M13 744.5 H15 M13 755.5 H15 M13 761.5 H15 M13 766.5 H15 M13 772.5 H15 M11 778.5 H15 M13 783.5 H15 M13 789.5 H15 M13 795.5 H15 M13 800.5 H15 M13 812.5 H15 M13 817.5 H15 M13 823.5 H15 M13 829.5 H15 M11 834.5 H15 M13 840.5 H15 M13 846.5 H15 M13 851.5 H15 M13 857.5 H15 M13 868.5 H15 M13 874.5 H15 M13 880.5 H15" stroke="#a6a6a6" stroke-width="1"/><path d="M0 12.5 H15 M0 69.5 H15 M0 126.5 H15 M0 182.5 H15 M0 239.5 H15 M0 296.5 H15 M0 352.5 H15 M0 409.5 H15 M0 466.5 H15 M0 522.5 H15 M0 579.5 H15 M0 636.5 H15 M0 692.5 H15 M0 749.5 H15 M0 806.5 H15 M0 863.5 H15" stroke="#8a8a8a" stroke-width="1"/></svg><div class="t" style="left:44px;top:155.16px;font-size:9.5px;color:#e0e0e0;">1</div><div class="t" style="left:44px;top:164.16px;font-size:9.5px;color:#e0e0e0;">0</div><div class="t" style="left:44px;top:211.85px;font-size:9.5px;color:#e0e0e0;">2</div><div class="t" style="left:44px;top:220.85px;font-size:9.5px;color:#e0e0e0;">0</div><div class="t" style="left:44px;top:268.54px;font-size:9.5px;color:#e0e0e0;">3</div><div class="t" style="left:44px;top:277.54px;font-size:9.5px;color:#e0e0e0;">0</div><div class="t" style="left:44px;top:325.23px;font-size:9.5px;color:#e0e0e0;">4</div><div class="t" style="left:44px;top:334.23px;font-size:9.5px;color:#e0e0e0;">0</div><div class="t" style="left:44px;top:381.92px;font-size:9.5px;color:#e0e0e0;">5</div><div class="t" style="left:44px;top:390.92px;font-size:9.5px;color:#e0e0e0;">0</div><div class="t" style="left:44px;top:438.61px;font-size:9.5px;color:#e0e0e0;">6</div><div class="t" style="left:44px;top:447.61px;font-size:9.5px;color:#e0e0e0;">0</div><div class="t" style="left:44px;top:495.30px;font-size:9.5px;color:#e0e0e0;">7</div><div class="t" style="left:44px;top:504.30px;font-size:9.5px;color:#e0e0e0;">0</div><div class="t" style="left:44px;top:551.99px;font-size:9.5px;color:#e0e0e0;">8</div><div class="t" style="left:44px;top:560.99px;font-size:9.5px;color:#e0e0e0;">0</div><div class="t" style="left:44px;top:608.68px;font-size:9.5px;color:#e0e0e0;">9</div><div class="t" style="left:44px;top:617.68px;font-size:9.5px;color:#e0e0e0;">0</div><div class="t" style="left:44px;top:665.37px;font-size:9.5px;color:#e0e0e0;">1</div><div class="t" style="left:44px;top:674.37px;font-size:9.5px;color:#e0e0e0;">0</div><div class="t" style="left:44px;top:683.37px;font-size:9.5px;color:#e0e0e0;">0</div><div class="t" style="left:44px;top:722.06px;font-size:9.5px;color:#e0e0e0;">1</div><div class="t" style="left:44px;top:731.06px;font-size:9.5px;color:#e0e0e0;">1</div><div class="t" style="left:44px;top:740.06px;font-size:9.5px;color:#e0e0e0;">0</div><div class="t" style="left:44px;top:778.75px;font-size:9.5px;color:#e0e0e0;">1</div><div class="t" style="left:44px;top:787.75px;font-size:9.5px;color:#e0e0e0;">2</div><div class="t" style="left:44px;top:796.75px;font-size:9.5px;color:#e0e0e0;">0</div><div class="t" style="left:44px;top:835.44px;font-size:9.5px;color:#e0e0e0;">1</div><div class="t" style="left:44px;top:844.44px;font-size:9.5px;color:#e0e0e0;">3</div><div class="t" style="left:44px;top:853.44px;font-size:9.5px;color:#e0e0e0;">0</div><div class="t" style="left:44px;top:892.13px;font-size:9.5px;color:#e0e0e0;">1</div><div class="t" style="left:44px;top:901.13px;font-size:9.5px;color:#e0e0e0;">4</div><div class="t" style="left:44px;top:910.13px;font-size:9.5px;color:#e0e0e0;">0</div><div class="t" style="left:44px;top:948.82px;font-size:9.5px;color:#e0e0e0;">1</div><div class="t" style="left:44px;top:957.82px;font-size:9.5px;color:#e0e0e0;">5</div><div class="t" style="left:44px;top:966.82px;font-size:9.5px;color:#e0e0e0;">0</div><div class="t" style="left:44px;top:1005.51px;font-size:9.5px;color:#e0e0e0;">1</div><div class="t" style="left:44px;top:1014.51px;font-size:9.5px;color:#e0e0e0;">6</div><div class="t" style="left:44px;top:1023.51px;font-size:9.5px;color:#e0e0e0;">0</div><svg style="left:42px;top:634px;" width="15" height="2" viewBox="0 0 15 2"><path d="M0 0.5 H15" stroke="#d8d8d8" stroke-width="1" stroke-dasharray="1 1"/></svg><div class="a" style="left:657px;top:181px;width:602px;height:842px;border:1px solid #4d9bff;border-bottom:none"></div><div class="t" style="left:653.5px;top:182.05px;font-size:20px;color:#4f7fc0;font-family:'Liberation Serif',serif;"><i>#</i></div><svg style="left:955.8px;top:185px;" width="9.0" height="17" viewBox="0 0 9.0 17"><path d="M4.96 0 H4.00 A4.00 3.76 0 0 0 4.00 7.52 Z" fill="#5286c8"/><rect x="4.00" y="0" width="4.00" height="0.90" fill="#5286c8"/><rect x="4.00" y="0" width="1.28" height="16" fill="#5286c8"/><rect x="6.72" y="0" width="1.28" height="16" fill="#5286c8"/></svg><div class="t" style="left:816px;top:207.68px;font-size:24px;color:#000;font-weight:bold;white-space:pre">З о в &nbsp; Б е л о й &nbsp; Г о р ы</div><div class="a" style="left:833.6px;top:221.75px;width:1.5px;height:1.5px;background:#5286c8"></div><div class="a" style="left:855.0px;top:221.75px;width:1.5px;height:1.5px;background:#5286c8"></div><div class="a" style="left:876.4px;top:221.75px;width:1.5px;height:1.5px;background:#5286c8"></div><div class="a" style="left:883.1px;top:221.75px;width:1.5px;height:1.5px;background:#5286c8"></div><div class="a" style="left:889.7px;top:221.75px;width:1.5px;height:1.5px;background:#5286c8"></div><div class="a" style="left:913.6px;top:221.75px;width:1.5px;height:1.5px;background:#5286c8"></div><div class="a" style="left:933.6px;top:221.75px;width:1.5px;height:1.5px;background:#5286c8"></div><div class="a" style="left:955.6px;top:221.75px;width:1.5px;height:1.5px;background:#5286c8"></div><div class="a" style="left:976.9px;top:221.75px;width:1.5px;height:1.5px;background:#5286c8"></div><div class="a" style="left:998.3000000000001px;top:221.75px;width:1.5px;height:1.5px;background:#5286c8"></div><div class="a" style="left:1005.0px;top:221.75px;width:1.5px;height:1.5px;background:#5286c8"></div><div class="a" style="left:1011.6px;top:221.75px;width:1.5px;height:1.5px;background:#5286c8"></div><div class="a" style="left:1031.8999999999999px;top:221.75px;width:1.5px;height:1.5px;background:#5286c8"></div><div class="a" style="left:1053.3px;top:221.75px;width:1.5px;height:1.5px;background:#5286c8"></div><div class="a" style="left:1074.6px;top:221.75px;width:1.5px;height:1.5px;background:#5286c8"></div><svg style="left:1098.3px;top:214px;" width="9.0" height="17" viewBox="0 0 9.0 17"><path d="M4.96 0 H4.00 A4.00 3.76 0 0 0 4.00 7.52 Z" fill="#5286c8"/><rect x="4.00" y="0" width="4.00" height="0.90" fill="#5286c8"/><rect x="4.00" y="0" width="1.28" height="16" fill="#5286c8"/><rect x="6.72" y="0" width="1.28" height="16" fill="#5286c8"/></svg><svg style="left:955px;top:243px;" width="9.0" height="17" viewBox="0 0 9.0 17"><path d="M4.96 0 H4.00 A4.00 3.76 0 0 0 4.00 7.52 Z" fill="#5286c8"/><rect x="4.00" y="0" width="4.00" height="0.90" fill="#5286c8"/><rect x="4.00" y="0" width="1.28" height="16" fill="#5286c8"/><rect x="6.72" y="0" width="1.28" height="16" fill="#5286c8"/></svg><svg style="left:955px;top:272px;" width="9.0" height="17" viewBox="0 0 9.0 17"><path d="M4.96 0 H4.00 A4.00 3.76 0 0 0 4.00 7.52 Z" fill="#5286c8"/><rect x="4.00" y="0" width="4.00" height="0.90" fill="#5286c8"/><rect x="4.00" y="0" width="1.28" height="16" fill="#5286c8"/><rect x="6.72" y="0" width="1.28" height="16" fill="#5286c8"/></svg><svg style="left:955px;top:300px;" width="9.0" height="17" viewBox="0 0 9.0 17"><path d="M4.96 0 H4.00 A4.00 3.76 0 0 0 4.00 7.52 Z" fill="#5286c8"/><rect x="4.00" y="0" width="4.00" height="0.90" fill="#5286c8"/><rect x="4.00" y="0" width="1.28" height="16" fill="#5286c8"/><rect x="6.72" y="0" width="1.28" height="16" fill="#5286c8"/></svg><div class="t" style="left:787px;top:327.65px;font-size:36px;color:#000;font-family:'Liberation Serif',serif;font-style:italic">Константин Устинов</div><div class="a" style="left:989.45px;top:348.95px;width:1.5px;height:1.5px;background:#5286c8"></div><svg style="left:1125.4px;top:337px;" width="13.0" height="25" viewBox="0 0 13.0 25"><path d="M7.44 0 H6.00 A6.00 5.64 0 0 0 6.00 11.28 Z" fill="#5286c8"/><rect x="6.00" y="0" width="6.00" height="1.34" fill="#5286c8"/><rect x="6.00" y="0" width="1.92" height="24" fill="#5286c8"/><rect x="10.08" y="0" width="1.92" height="24" fill="#5286c8"/></svg><svg style="left:954px;top:380px;" width="13.0" height="25" viewBox="0 0 13.0 25"><path d="M7.44 0 H6.00 A6.00 5.64 0 0 0 6.00 11.28 Z" fill="#5286c8"/><rect x="6.00" y="0" width="6.00" height="1.34" fill="#5286c8"/><rect x="6.00" y="0" width="1.92" height="24" fill="#5286c8"/><rect x="10.08" y="0" width="1.92" height="24" fill="#5286c8"/></svg><svg style="left:954px;top:423px;" width="13.0" height="25" viewBox="0 0 13.0 25"><path d="M7.44 0 H6.00 A6.00 5.64 0 0 0 6.00 11.28 Z" fill="#5286c8"/><rect x="6.00" y="0" width="6.00" height="1.34" fill="#5286c8"/><rect x="6.00" y="0" width="1.92" height="24" fill="#5286c8"/><rect x="10.08" y="0" width="1.92" height="24" fill="#5286c8"/></svg><svg style="left:954px;top:466px;" width="13.0" height="25" viewBox="0 0 13.0 25"><path d="M7.44 0 H6.00 A6.00 5.64 0 0 0 6.00 11.28 Z" fill="#5286c8"/><rect x="6.00" y="0" width="6.00" height="1.34" fill="#5286c8"/><rect x="6.00" y="0" width="1.92" height="24" fill="#5286c8"/><rect x="10.08" y="0" width="1.92" height="24" fill="#5286c8"/></svg><div class="t" style="left:778px;top:522.77px;font-size:35px;color:#000;font-weight:bold;font-style:italic">Долина Святых Гор</div><div class="a" style="left:912.55px;top:544.95px;width:1.5px;height:1.5px;background:#5286c8"></div><div class="a" style="left:1068.95px;top:544.95px;width:1.5px;height:1.5px;background:#5286c8"></div><svg style="left:1135.4px;top:533px;" width="13.0" height="25" viewBox="0 0 13.0 25"><path d="M7.44 0 H6.00 A6.00 5.64 0 0 0 6.00 11.28 Z" fill="#5286c8"/><rect x="6.00" y="0" width="6.00" height="1.34" fill="#5286c8"/><rect x="6.00" y="0" width="1.92" height="24" fill="#5286c8"/><rect x="10.08" y="0" width="1.92" height="24" fill="#5286c8"/></svg><svg style="left:956px;top:602.3px;" width="10.25" height="19.5" viewBox="0 0 10.25 19.5"><path d="M5.74 0 H4.62 A4.62 4.35 0 0 0 4.62 8.70 Z" fill="#5286c8"/><rect x="4.62" y="0" width="4.62" height="1.04" fill="#5286c8"/><rect x="4.62" y="0" width="1.48" height="18.5" fill="#5286c8"/><rect x="7.77" y="0" width="1.48" height="18.5" fill="#5286c8"/></svg><svg style="left:955.4px;top:670.4px;" width="12.75" height="24.5" viewBox="0 0 12.75 24.5"><path d="M7.29 0 H5.88 A5.88 5.52 0 0 0 5.88 11.04 Z" fill="#5286c8"/><rect x="5.88" y="0" width="5.88" height="1.32" fill="#5286c8"/><rect x="5.88" y="0" width="1.88" height="23.5" fill="#5286c8"/><rect x="9.87" y="0" width="1.88" height="23.5" fill="#5286c8"/></svg><svg style="left:954.5px;top:719px;" width="13.0" height="25" viewBox="0 0 13.0 25"><path d="M7.44 0 H6.00 A6.00 5.64 0 0 0 6.00 11.28 Z" fill="#5286c8"/><rect x="6.00" y="0" width="6.00" height="1.34" fill="#5286c8"/><rect x="6.00" y="0" width="1.92" height="24" fill="#5286c8"/><rect x="10.08" y="0" width="1.92" height="24" fill="#5286c8"/></svg><svg style="left:844px;top:747.85px;" width="226" height="229" viewBox="0 0 226 229"><g fill="#000" shape-rendering="crispEdges"><rect x="25.02" y="8.45" width="25.02" height="8.47"/><rect x="75.07" y="8.45" width="25.02" height="8.47"/><rect x="125.11" y="8.45" width="25.02" height="8.47"/><rect x="175.16" y="8.45" width="25.02" height="8.47"/><rect x="16.68" y="16.90" width="41.70" height="8.47"/><rect x="66.73" y="16.90" width="41.70" height="8.47"/><rect x="116.77" y="16.90" width="41.70" height="8.47"/><rect x="166.81" y="16.90" width="41.70" height="8.47"/><rect x="8.34" y="25.35" width="25.02" height="8.47"/><rect x="41.70" y="25.35" width="41.70" height="8.47"/><rect x="91.75" y="25.35" width="41.70" height="8.47"/><rect x="141.79" y="25.35" width="41.70" height="8.47"/><rect x="191.84" y="25.35" width="25.02" height="8.47"/><rect x="0.00" y="33.80" width="25.02" height="8.47"/><rect x="50.04" y="33.80" width="25.02" height="8.47"/><rect x="100.09" y="33.80" width="25.02" height="8.47"/><rect x="150.13" y="33.80" width="25.02" height="8.47"/><rect x="200.18" y="33.80" width="25.02" height="8.47"/><rect x="8.34" y="42.25" width="25.02" height="8.47"/><rect x="58.39" y="42.25" width="8.34" height="8.47"/><rect x="91.75" y="42.25" width="41.70" height="8.47"/><rect x="158.47" y="42.25" width="8.34" height="8.47"/><rect x="191.84" y="42.25" width="25.02" height="8.47"/><rect x="16.68" y="50.70" width="25.02" height="8.47"/><rect x="83.41" y="50.70" width="25.02" height="8.47"/><rect x="116.77" y="50.70" width="25.02" height="8.47"/><rect x="183.50" y="50.70" width="25.02" height="8.47"/><rect x="25.02" y="59.15" width="25.02" height="8.47"/><rect x="75.07" y="59.15" width="25.02" height="8.47"/><rect x="125.11" y="59.15" width="25.02" height="8.47"/><rect x="175.16" y="59.15" width="25.02" height="8.47"/><rect x="16.68" y="67.60" width="25.02" height="8.47"/><rect x="83.41" y="67.60" width="25.02" height="8.47"/><rect x="116.77" y="67.60" width="25.02" height="8.47"/><rect x="183.50" y="67.60" width="25.02" height="8.47"/><rect x="8.34" y="76.05" width="25.02" height="8.47"/><rect x="58.39" y="76.05" width="8.34" height="8.47"/><rect x="91.75" y="76.05" width="41.70" height="8.47"/><rect x="158.47" y="76.05" width="8.34" height="8.47"/><rect x="191.84" y="76.05" width="25.02" height="8.47"/><rect x="0.00" y="84.50" width="25.02" height="8.47"/><rect x="50.04" y="84.50" width="25.02" height="8.47"/><rect x="100.09" y="84.50" width="25.02" height="8.47"/><rect x="150.13" y="84.50" width="25.02" height="8.47"/><rect x="200.18" y="84.50" width="25.02" height="8.47"/><rect x="8.34" y="92.95" width="25.02" height="8.47"/><rect x="41.70" y="92.95" width="41.70" height="8.47"/><rect x="108.43" y="92.95" width="8.34" height="8.47"/><rect x="141.79" y="92.95" width="41.70" height="8.47"/><rect x="191.84" y="92.95" width="25.02" height="8.47"/><rect x="16.68" y="101.40" width="41.70" height="8.47"/><rect x="66.73" y="101.40" width="25.02" height="8.47"/><rect x="133.45" y="101.40" width="25.02" height="8.47"/><rect x="166.81" y="101.40" width="41.70" height="8.47"/><rect x="25.02" y="109.85" width="25.02" height="8.47"/><rect x="75.07" y="109.85" width="25.02" height="8.47"/><rect x="125.11" y="109.85" width="25.02" height="8.47"/><rect x="175.16" y="109.85" width="25.02" height="8.47"/><rect x="16.68" y="118.30" width="41.70" height="8.47"/><rect x="66.73" y="118.30" width="25.02" height="8.47"/><rect x="133.45" y="118.30" width="25.02" height="8.47"/><rect x="166.81" y="118.30" width="41.70" height="8.47"/><rect x="8.34" y="126.75" width="25.02" height="8.47"/><rect x="41.70" y="126.75" width="41.70" height="8.47"/><rect x="108.43" y="126.75" width="8.34" height="8.47"/><rect x="141.79" y="126.75" width="41.70" height="8.47"/><rect x="191.84" y="126.75" width="25.02" height="8.47"/><rect x="0.00" y="135.20" width="25.02" height="8.47"/><rect x="50.04" y="135.20" width="25.02" height="8.47"/><rect x="100.09" y="135.20" width="25.02" height="8.47"/><rect x="150.13" y="135.20" width="25.02" height="8.47"/><rect x="200.18" y="135.20" width="25.02" height="8.47"/><rect x="8.34" y="143.65" width="25.02" height="8.47"/><rect x="58.39" y="143.65" width="8.34" height="8.47"/><rect x="91.75" y="143.65" width="41.70" height="8.47"/><rect x="158.47" y="143.65" width="8.34" height="8.47"/><rect x="191.84" y="143.65" width="25.02" height="8.47"/><rect x="16.68" y="152.10" width="25.02" height="8.47"/><rect x="83.41" y="152.10" width="25.02" height="8.47"/><rect x="116.77" y="152.10" width="25.02" height="8.47"/><rect x="183.50" y="152.10" width="25.02" height="8.47"/><rect x="25.02" y="160.55" width="25.02" height="8.47"/><rect x="75.07" y="160.55" width="25.02" height="8.47"/><rect x="125.11" y="160.55" width="25.02" height="8.47"/><rect x="175.16" y="160.55" width="25.02" height="8.47"/><rect x="16.68" y="169.00" width="25.02" height="8.47"/><rect x="83.41" y="169.00" width="25.02" height="8.47"/><rect x="116.77" y="169.00" width="25.02" height="8.47"/><rect x="183.50" y="169.00" width="25.02" height="8.47"/><rect x="8.34" y="177.45" width="25.02" height="8.47"/><rect x="58.39" y="177.45" width="8.34" height="8.47"/><rect x="91.75" y="177.45" width="41.70" height="8.47"/><rect x="158.47" y="177.45" width="8.34" height="8.47"/><rect x="191.84" y="177.45" width="25.02" height="8.47"/><rect x="0.00" y="185.90" width="25.02" height="8.47"/><rect x="50.04" y="185.90" width="25.02" height="8.47"/><rect x="100.09" y="185.90" width="25.02" height="8.47"/><rect x="150.13" y="185.90" width="25.02" height="8.47"/><rect x="200.18" y="185.90" width="25.02" height="8.47"/><rect x="8.34" y="194.35" width="25.02" height="8.47"/><rect x="41.70" y="194.35" width="41.70" height="8.47"/><rect x="91.75" y="194.35" width="41.70" height="8.47"/><rect x="141.79" y="194.35" width="41.70" height="8.47"/><rect x="191.84" y="194.35" width="25.02" height="8.47"/><rect x="16.68" y="202.80" width="41.70" height="8.47"/><rect x="66.73" y="202.80" width="41.70" height="8.47"/><rect x="116.77" y="202.80" width="41.70" height="8.47"/><rect x="166.81" y="202.80" width="41.70" height="8.47"/><rect x="25.02" y="211.25" width="25.02" height="8.47"/><rect x="75.07" y="211.25" width="25.02" height="8.47"/><rect x="125.11" y="211.25" width="25.02" height="8.47"/><rect x="175.16" y="211.25" width="25.02" height="8.47"/></g></svg><div class="a" style="left:843px;top:747px;width:227px;height:228px;border:1px solid #5a8ad0"></div><svg style="left:852px;top:741.7px;" width="11" height="11" viewBox="0 0 11 11"><circle cx="5.5" cy="5.5" r="5.5" fill="#e85a3c"/><path d="M3.6 4.2 a1.9 1.9 0 1 1 2.9 1.6 Q5.5 6.3 5.5 7" fill="none" stroke="#fff" stroke-width="1.3"/><circle cx="5.5" cy="8.6" r="0.8" fill="#fff"/></svg><svg style="left:1067.2px;top:952px;" width="13.5" height="26" viewBox="0 0 13.5 26"><path d="M7.75 0 H6.25 A6.25 5.88 0 0 0 6.25 11.75 Z" fill="#5286c8"/><rect x="6.25" y="0" width="6.25" height="1.40" fill="#5286c8"/><rect x="6.25" y="0" width="2.00" height="25" fill="#5286c8"/><rect x="10.50" y="0" width="2.00" height="25" fill="#5286c8"/></svg><svg style="left:954.7px;top:996.7px;" width="13.0" height="25" viewBox="0 0 13.0 25"><path d="M7.44 0 H6.00 A6.00 5.64 0 0 0 6.00 11.28 Z" fill="#5286c8"/><rect x="6.00" y="0" width="6.00" height="1.34" fill="#5286c8"/><rect x="6.00" y="0" width="1.92" height="24" fill="#5286c8"/><rect x="10.08" y="0" width="1.92" height="24" fill="#5286c8"/></svg><svg style="left:1903px;top:98px;" width="10" height="7" viewBox="0 0 10 7"><path d="M4.5 0.5 L1 3.5 L4.5 6.5 Z M9.5 0.5 L6 3.5 L9.5 6.5 Z" fill="#d8d8d8"/></svg><div class="a" style="left:1827px;top:111px;width:1px;height:4px;background:#3a3a3a"></div><div class="a" style="left:1829px;top:111px;width:1px;height:4px;background:#3a3a3a"></div><div class="a" style="left:1831px;top:111px;width:1px;height:4px;background:#3a3a3a"></div><div class="a" style="left:1833px;top:111px;width:1px;height:4px;background:#3a3a3a"></div><div class="a" style="left:1835px;top:111px;width:1px;height:4px;background:#3a3a3a"></div><div class="a" style="left:1837px;top:111px;width:1px;height:4px;background:#3a3a3a"></div><div class="a" style="left:1839px;top:111px;width:1px;height:4px;background:#3a3a3a"></div><div class="a" style="left:1841px;top:111px;width:1px;height:4px;background:#3a3a3a"></div><div class="a" style="left:1843px;top:111px;width:1px;height:4px;background:#3a3a3a"></div><div class="a" style="left:1845px;top:111px;width:1px;height:4px;background:#3a3a3a"></div><div class="t" style="left:1792px;top:127.19px;font-size:11px;color:#e6e6e6;font-weight:bold">Страницы</div><svg style="left:1764px;top:123px;" width="20" height="19" viewBox="0 0 20 19"><path d="M1.5 5 L4.5 2 H9 V15 H1.5 Z M19 5 L16 2 H11.5 V15 H19 Z" fill="#c8c8c8"/><path d="M1.5 5 L4.5 2 V5 Z M19 5 L16 2 V5 Z" fill="#777"/><rect x="9.6" y="0" width="1.3" height="18" fill="#c8c8c8"/></svg><div class="t" style="left:1792px;top:155.19px;font-size:11px;color:#e6e6e6;font-weight:bold">Слои</div><svg style="left:1764px;top:151px;" width="20" height="19" viewBox="0 0 20 19"><path d="M10 1 L18.5 6.5 L10 12 L1.5 6.5 Z" fill="#c8c8c8"/><path d="M3.5 10 L1.5 11.5 L10 17 L18.5 11.5 L16.5 10 L10 14 Z" fill="#c8c8c8"/></svg><div class="t" style="left:1792px;top:183.19px;font-size:11px;color:#e6e6e6;font-weight:bold">Связи</div><svg style="left:1764px;top:179px;" width="20" height="19" viewBox="0 0 20 19"><path d="M8 5.5 H5 a3.5 3.5 0 0 0 0 7 H9 a3.5 3.5 0 0 0 2.5 -1.5 M12 12.5 H15 a3.5 3.5 0 0 0 0 -7 H11 a3.5 3.5 0 0 0 -2.5 1.5" fill="none" stroke="#c8c8c8" stroke-width="1.8"/></svg><div class="a" style="left:1755px;top:204px;width:164px;height:1px;background:#3a3a3a"></div><div class="a" style="left:1827px;top:208px;width:1px;height:4px;background:#3a3a3a"></div><div class="a" style="left:1829px;top:208px;width:1px;height:4px;background:#3a3a3a"></div><div class="a" style="left:1831px;top:208px;width:1px;height:4px;background:#3a3a3a"></div><div class="a" style="left:1833px;top:208px;width:1px;height:4px;background:#3a3a3a"></div><div class="a" style="left:1835px;top:208px;width:1px;height:4px;background:#3a3a3a"></div><div class="a" style="left:1837px;top:208px;width:1px;height:4px;background:#3a3a3a"></div><div class="a" style="left:1839px;top:208px;width:1px;height:4px;background:#3a3a3a"></div><div class="a" style="left:1841px;top:208px;width:1px;height:4px;background:#3a3a3a"></div><div class="a" style="left:1843px;top:208px;width:1px;height:4px;background:#3a3a3a"></div><div class="a" style="left:1845px;top:208px;width:1px;height:4px;background:#3a3a3a"></div><div class="t" style="left:1792px;top:224.19px;font-size:11px;color:#e6e6e6;font-weight:bold">Обводка</div><svg style="left:1764px;top:220px;" width="20" height="19" viewBox="0 0 20 19"><rect x="2" y="2" width="17" height="1.2" fill="#c8c8c8"/><rect x="2" y="6" width="17" height="2" fill="#c8c8c8"/><rect x="2" y="11" width="17" height="3" fill="#c8c8c8"/></svg><div class="t" style="left:1792px;top:252.19px;font-size:11px;color:#e6e6e6;font-weight:bold">Образцы</div><svg style="left:1764px;top:248px;" width="20" height="19" viewBox="0 0 20 19"><rect x="2" y="3" width="16" height="13" fill="#c8c8c8"/><rect x="3" y="4.0" width="4" height="5" fill="#8a8a8a"/><rect x="8" y="4.0" width="4" height="5" fill="#bbbbbb"/><rect x="13" y="4.0" width="4" height="5" fill="#8a8a8a"/><rect x="3" y="9.5" width="4" height="5" fill="#aaaaaa"/><rect x="8" y="9.5" width="4" height="5" fill="#8a8a8a"/><rect x="13" y="9.5" width="4" height="5" fill="#aaaaaa"/></svg><div class="t" style="left:1792px;top:280.19px;font-size:11px;color:#e6e6e6;font-weight:bold">Градиент</div><svg style="left:1764px;top:276px;" width="20" height="19" viewBox="0 0 20 19"><defs><linearGradient id="g2" x1="0" x2="1"><stop offset="0" stop-color="#1a1a1a"/><stop offset="1" stop-color="#e8e8e8"/></linearGradient></defs><rect x="2" y="3" width="16" height="13" fill="url(#g2)" stroke="#c8c8c8" stroke-width="1"/></svg><div class="t" style="left:1792px;top:308.19px;font-size:11px;color:#e6e6e6;font-weight:bold">CC Libraries</div><svg style="left:1764px;top:304px;" width="20" height="19" viewBox="0 0 20 19"><rect x="2" y="3" width="13" height="15" fill="none" stroke="#c8c8c8" stroke-width="1.3"/><path d="M5 1 H18 V15" fill="none" stroke="#c8c8c8" stroke-width="1.3"/><path d="M9 5 V11 L11 9.5 L13 11 V5 Z" fill="#c8c8c8"/></svg><div class="a" style="left:1755px;top:329px;width:164px;height:1px;background:#3a3a3a"></div><div class="a" style="left:1827px;top:334px;width:1px;height:4px;background:#3a3a3a"></div><div class="a" style="left:1829px;top:334px;width:1px;height:4px;background:#3a3a3a"></div><div class="a" style="left:1831px;top:334px;width:1px;height:4px;background:#3a3a3a"></div><div class="a" style="left:1833px;top:334px;width:1px;height:4px;background:#3a3a3a"></div><div class="a" style="left:1835px;top:334px;width:1px;height:4px;background:#3a3a3a"></div><div class="a" style="left:1837px;top:334px;width:1px;height:4px;background:#3a3a3a"></div><div class="a" style="left:1839px;top:334px;width:1px;height:4px;background:#3a3a3a"></div><div class="a" style="left:1841px;top:334px;width:1px;height:4px;background:#3a3a3a"></div><div class="a" style="left:1843px;top:334px;width:1px;height:4px;background:#3a3a3a"></div><div class="a" style="left:1845px;top:334px;width:1px;height:4px;background:#3a3a3a"></div><div class="t" style="left:1767px;top:345.95px;font-size:16px;color:#b4b4b4;letter-spacing:-0.5px"><i>fx</i></div><div class="t" style="left:1792px;top:350.19px;font-size:11px;color:#e6e6e6;font-weight:bold">Эффекты</div><div class="t" style="left:1792px;top:377.19px;font-size:11px;color:#e6e6e6;font-weight:bold">Стили объектов</div><svg style="left:1764px;top:373px;" width="20" height="19" viewBox="0 0 20 19"><path d="M5 3 H8 a2 2 0 0 0 4 0 H18 V8 a2 2 0 0 0 0 4 V16 H12" fill="none" stroke="#c8c8c8" stroke-width="1.3"/><path d="M5 3 V9" fill="none" stroke="#c8c8c8" stroke-width="1.3"/><rect x="1.5" y="10.5" width="6" height="6" fill="#535353" stroke="#c8c8c8" stroke-width="1.2"/><rect x="4.5" y="13.5" width="6" height="5" fill="#535353" stroke="#c8c8c8" stroke-width="1.2"/></svg><div class="a" style="left:1755px;top:397px;width:164px;height:1px;background:#3a3a3a"></div><div class="a" style="left:1827px;top:402px;width:1px;height:4px;background:#3a3a3a"></div><div class="a" style="left:1829px;top:402px;width:1px;height:4px;background:#3a3a3a"></div><div class="a" style="left:1831px;top:402px;width:1px;height:4px;background:#3a3a3a"></div><div class="a" style="left:1833px;top:402px;width:1px;height:4px;background:#3a3a3a"></div><div class="a" style="left:1835px;top:402px;width:1px;height:4px;background:#3a3a3a"></div><div class="a" style="left:1837px;top:402px;width:1px;height:4px;background:#3a3a3a"></div><div class="a" style="left:1839px;top:402px;width:1px;height:4px;background:#3a3a3a"></div><div class="a" style="left:1841px;top:402px;width:1px;height:4px;background:#3a3a3a"></div><div class="a" style="left:1843px;top:402px;width:1px;height:4px;background:#3a3a3a"></div><div class="a" style="left:1845px;top:402px;width:1px;height:4px;background:#3a3a3a"></div><div class="t" style="left:1792px;top:418.19px;font-size:11px;color:#e6e6e6;font-weight:bold">Стили абзацев</div><svg style="left:1764px;top:414px;" width="20" height="19" viewBox="0 0 20 19"><path d="M12 2 H18 M14 2 V15 M17 2 V15" stroke="#c8c8c8" stroke-width="1.4"/><path d="M14 2 a3.5 3.5 0 0 0 0 7 Z" fill="#c8c8c8"/><rect x="1.5" y="10.5" width="6" height="6" fill="#535353" stroke="#c8c8c8" stroke-width="1.2"/><rect x="4.5" y="13.5" width="6" height="5" fill="#535353" stroke="#c8c8c8" stroke-width="1.2"/></svg><div class="a" style="left:1755px;top:439px;width:164px;height:1px;background:#3a3a3a"></div><div class="a" style="left:1827px;top:444px;width:1px;height:4px;background:#3a3a3a"></div><div class="a" style="left:1829px;top:444px;width:1px;height:4px;background:#3a3a3a"></div><div class="a" style="left:1831px;top:444px;width:1px;height:4px;background:#3a3a3a"></div><div class="a" style="left:1833px;top:444px;width:1px;height:4px;background:#3a3a3a"></div><div class="a" style="left:1835px;top:444px;width:1px;height:4px;background:#3a3a3a"></div><div class="a" style="left:1837px;top:444px;width:1px;height:4px;background:#3a3a3a"></div><div class="a" style="left:1839px;top:444px;width:1px;height:4px;background:#3a3a3a"></div><div class="a" style="left:1841px;top:444px;width:1px;height:4px;background:#3a3a3a"></div><div class="a" style="left:1843px;top:444px;width:1px;height:4px;background:#3a3a3a"></div><div class="a" style="left:1845px;top:444px;width:1px;height:4px;background:#3a3a3a"></div><div class="t" style="left:1792px;top:459.19px;font-size:11px;color:#e6e6e6;font-weight:bold">Стили символов</div><svg style="left:1764px;top:455px;" width="20" height="19" viewBox="0 0 20 19"><path d="M9 12 L13.5 1 L18 12 M11 8 H16" fill="none" stroke="#c8c8c8" stroke-width="1.4"/><rect x="1.5" y="10.5" width="6" height="6" fill="#535353" stroke="#c8c8c8" stroke-width="1.2"/><rect x="4.5" y="13.5" width="6" height="5" fill="#535353" stroke="#c8c8c8" stroke-width="1.2"/></svg><div class="a" style="left:1755px;top:480px;width:164px;height:1px;background:#3a3a3a"></div><div class="a" style="left:42px;top:1023px;width:1710px;height:17px;background:#535353"></div><div class="a" style="left:566px;top:1023px;width:1149px;height:17px;background:#4a4a4a"></div><div class="a" style="left:998px;top:1024px;width:558px;height:15px;background:#696969;border-radius:8px"></div><div class="t" style="left:56px;top:1026.53px;font-size:10px;color:#dedede;">150%</div><svg style="left:97px;top:1029px;" width="10" height="6" viewBox="0 0 10 6"><path d="M0.8 0.8 L5.0 4.6 L9.2 0.8" fill="none" stroke="#c8c8c8" stroke-width="1.05"/></svg><svg style="left:119px;top:1026px;" width="10" height="10" viewBox="0 0 10 10"><rect x="0.5" y="0" width="1.6" height="10" fill="#8a8a8a"/><path d="M9 0 L3 5 L9 10 Z" fill="#8a8a8a"/></svg><svg style="left:141px;top:1026px;" width="6" height="10" viewBox="0 0 6 10"><path d="M5.5 0 L0 5 L5.5 10 Z" fill="#8a8a8a"/></svg><div class="a" style="left:158px;top:1023px;width:91px;height:16px;background:#474747;border:1px solid #6e6e6e;border-radius:3px"></div><div class="a" style="left:230px;top:1023px;width:1px;height:16px;background:#6e6e6e"></div><div class="t" style="left:163px;top:1025.69px;font-size:11px;color:#dedede;">1</div><svg style="left:234px;top:1029px;" width="10" height="6" viewBox="0 0 10 6"><path d="M0.8 0.8 L5.0 4.6 L9.2 0.8" fill="none" stroke="#c8c8c8" stroke-width="1.05"/></svg><svg style="left:261px;top:1026px;" width="6" height="10" viewBox="0 0 6 10"><path d="M0.5 0 L6 5 L0.5 10 Z" fill="#c8c8c8"/></svg><svg style="left:280px;top:1026px;" width="10" height="10" viewBox="0 0 10 10"><path d="M0.5 0 L6 5 L0.5 10 Z" fill="#c8c8c8"/><rect x="7.5" y="0" width="1.6" height="10" fill="#c8c8c8"/></svg><svg style="left:305px;top:1024px;" width="16" height="15" viewBox="0 0 16 15"><path d="M1.5 12 V7 a5.5 5.5 0 0 1 11 0 V9" fill="none" stroke="#aaaaaa" stroke-width="2.2"/><path d="M7 3 V7 H10" fill="none" stroke="#aaaaaa" stroke-width="1.2"/><path d="M12 12 L15 12 L13.5 14 Z" fill="#aaaaaa"/></svg><div class="t" style="left:338px;top:1026.28px;font-size:10.3px;color:#dedede;">[Основной] (рабо...</div><svg style="left:440px;top:1029px;" width="10" height="6" viewBox="0 0 10 6"><path d="M0.8 0.8 L5.0 4.6 L9.2 0.8" fill="none" stroke="#c8c8c8" stroke-width="1.05"/></svg><svg style="left:463px;top:1025px;" width="12" height="12" viewBox="0 0 12 12"><circle cx="6" cy="6" r="5.5" fill="#ee2a2a"/></svg><div class="t" style="left:481px;top:1026.53px;font-size:10px;color:#e4e4e4;">1 ошибка</div><svg style="left:551px;top:1029px;" width="10" height="6" viewBox="0 0 10 6"><path d="M0.8 0.8 L5.0 4.6 L9.2 0.8" fill="none" stroke="#c8c8c8" stroke-width="1.05"/></svg><svg style="left:572px;top:1026px;" width="6" height="10" viewBox="0 0 6 10"><path d="M5.5 0.5 L1 5 L5.5 9.5" fill="none" stroke="#8a8a8a" stroke-width="1"/></svg><svg style="left:1704px;top:1026px;" width="6" height="10" viewBox="0 0 6 10"><path d="M0.5 0.5 L5 5 L0.5 9.5" fill="none" stroke="#9a9a9a" stroke-width="1"/></svg><div class="a" style="left:1714px;top:1023px;width:38px;height:17px;background:#535353"></div><svg style="left:1719px;top:1025px;" width="17" height="13" viewBox="0 0 17 13"><rect x="0.8" y="0.8" width="15" height="11" fill="none" stroke="#d0d0d0" stroke-width="1.5"/><path d="M8.3 0.8 V11.8" stroke="#d0d0d0" stroke-width="1.5"/></svg><svg style="left:1740px;top:1027px;" width="10" height="10" viewBox="0 0 10 10"><rect x="9" y="1" width="1" height="1" fill="#8a8a8a"/><rect x="7" y="3" width="1" height="1" fill="#8a8a8a"/><rect x="9" y="3" width="1" height="1" fill="#8a8a8a"/><rect x="5" y="5" width="1" height="1" fill="#8a8a8a"/><rect x="7" y="5" width="1" height="1" fill="#8a8a8a"/><rect x="9" y="5" width="1" height="1" fill="#8a8a8a"/><rect x="3" y="7" width="1" height="1" fill="#8a8a8a"/><rect x="5" y="7" width="1" height="1" fill="#8a8a8a"/><rect x="7" y="7" width="1" height="1" fill="#8a8a8a"/><rect x="9" y="7" width="1" height="1" fill="#8a8a8a"/><rect x="1" y="9" width="1" height="1" fill="#8a8a8a"/><rect x="3" y="9" width="1" height="1" fill="#8a8a8a"/><rect x="5" y="9" width="1" height="1" fill="#8a8a8a"/><rect x="7" y="9" width="1" height="1" fill="#8a8a8a"/><rect x="9" y="9" width="1" height="1" fill="#8a8a8a"/></svg><svg style="left:1739px;top:130px;" width="11" height="6" viewBox="0 0 11 6"><path d="M1 5 L5.5 1 L10 5" fill="none" stroke="#8a8a8a" stroke-width="1"/></svg><svg style="left:1739px;top:1013px;" width="11" height="6" viewBox="0 0 11 6"><path d="M1 1 L5.5 5 L10 1" fill="none" stroke="#8a8a8a" stroke-width="1"/></svg><div class="a" style="left:1737px;top:1006px;width:15px;height:17px;background:#4f4f4f"></div><svg style="left:1739px;top:1012px;" width="11" height="6" viewBox="0 0 11 6"><path d="M1 1 L5.5 5 L10 1" fill="none" stroke="#9a9a9a" stroke-width="1"/></svg><svg style="left:16px;top:1052px;" width="17" height="17" viewBox="0 0 17 17"><path d="M0 2.3 L6.8 1.3 V7.8 H0 Z M7.8 1.2 L16.5 0 V7.8 H7.8 Z M0 8.8 H6.8 V15.4 L0 14.4 Z M7.8 8.8 H16.5 V16.6 L7.8 15.5 Z" fill="#ffffff"/></svg><svg style="left:59px;top:1051px;" width="18" height="18" viewBox="0 0 18 18"><circle cx="11" cy="6.5" r="5.2" fill="none" stroke="#1a1a1a" stroke-width="1.4"/><path d="M7.3 10.2 L1 16.5" stroke="#1a1a1a" stroke-width="1.6"/></svg><div class="t" style="left:88px;top:1052.88px;font-size:15.5px;color:#1e1e1e;">Поиск</div><svg style="left:258px;top:1041px;" width="76" height="38" viewBox="0 0 76 38"><defs><radialGradient id="sky" cx="0.5" cy="0.55" r="0.55"><stop offset="0" stop-color="#8a8fe0"/><stop offset="0.55" stop-color="#9a90dc"/><stop offset="0.85" stop-color="#c8bff0" stop-opacity="0.6"/><stop offset="1" stop-color="#f0f0f0" stop-opacity="0"/></radialGradient><linearGradient id="mt" x1="0" y1="0" x2="1" y2="0"><stop offset="0" stop-color="#a9b2e6"/><stop offset="0.5" stop-color="#f3d6de"/><stop offset="1" stop-color="#c9c1ea"/></linearGradient></defs><ellipse cx="38" cy="19" rx="36" ry="17" fill="url(#sky)"/><path d="M4 26 Q18 22 26 14 Q36 6 44 7 Q54 8 62 18 Q70 24 75 25 Q60 30 38 30 Q16 30 4 26 Z" fill="url(#mt)"/><path d="M18 33 Q30 24 40 18 Q52 14 62 22 Q56 28 48 33 Z" fill="#b7c0ec"/><path d="M40 34 Q46 26 52 18 Q56 22 58 28 Q60 33 68 34 Z" fill="#f1e3b8"/><path d="M6 30 Q38 26 72 31 Q60 37 38 37 Q14 37 6 30 Z" fill="#7e92d8"/><path d="M22 24 L25 16 L28 24 Z M26 23 L29 14 L32 23 Z M30 24 L33 17 L36 24 Z M34 26 L37 19 L40 26 Z" fill="#2f7f72"/><path d="M50 21 L53 15 L56 21 Z M53 26 L56 19 L59 26 Z M57 24 L60 18 L63 24 Z" fill="#3b9a86"/><rect x="20" y="26" width="9" height="4" fill="#8a4f2a"/><rect x="29" y="27" width="10" height="4" fill="#7a4424"/><path d="M19 26 L24 23 L30 26 Z M28 27 L33.5 24 L40 27 Z" fill="#dfe6ff"/><rect x="22" y="27.5" width="1.5" height="1.2" fill="#f5d56a"/><rect x="25" y="27.5" width="1.5" height="1.2" fill="#f5d56a"/><rect x="32" y="28.5" width="1.5" height="1.2" fill="#f5d56a"/><rect x="35" y="28.5" width="1.5" height="1.2" fill="#f5d56a"/><circle cx="5" cy="9" r="0.7" fill="#fff"/><circle cx="23" cy="4" r="0.7" fill="#fff"/><circle cx="37" cy="8" r="0.7" fill="#fff"/></svg><svg style="left:351px;top:1051px;" width="18" height="18" viewBox="0 0 18 18"><rect x="3" y="5" width="9" height="7" fill="none" stroke="#ffffff" stroke-width="1.2"/><path d="M1 4 V1.5 H14 V4 M1 13 V15.5 H14 V13 M16.5 1 V4 M16.5 8 V15.5" fill="none" stroke="#ffffff" stroke-width="1.2"/><rect x="15.3" y="4.8" width="2.4" height="2.4" fill="#fff"/></svg><svg style="left:403px;top:1047.5px;" width="26" height="26" viewBox="0 0 26 26"><defs><linearGradient id="al" x1="0" y1="0" x2="1" y2="1"><stop offset="0" stop-color="#d04ce8"/><stop offset="1" stop-color="#6a6cf5"/></linearGradient></defs><circle cx="13" cy="13" r="12.2" fill="url(#al)"/><path d="M13 6.5 Q15 6.5 17.5 12 Q20 17.5 18 18.5 Q16 19.5 13 18.5 Q10 19.5 8 18.5 Q6 17.5 8.5 12 Q11 6.5 13 6.5 Z" fill="#ffffff"/></svg><div class="a" style="left:453px;top:1053px;width:1px;height:14px;background:#6a6560"></div><div class="a" style="left:456px;top:1053px;width:1px;height:14px;background:#6a6560"></div><svg style="left:481px;top:1047px;" width="25" height="25" viewBox="0 0 25 25"><circle cx="12.5" cy="12.5" r="12.2" fill="#ffffff"/><path d="M7 5.5 L12.5 13 V20 M18 5.5 L12.5 13" fill="none" stroke="#ff5a1f" stroke-width="3.2" stroke-linecap="round"/><path d="M18 5.5 L14.5 10" stroke="#ff2d7a" stroke-width="3" stroke-linecap="round"/></svg><div class="a" style="left:473px;top:1078px;width:40px;height:2px;background:#76b9ed"></div><div class="a" style="left:518px;top:1040px;width:48px;height:40px;background:#5a564f"></div><div class="a" style="left:518px;top:1078px;width:48px;height:2px;background:#76b9ed"></div><div class="a" style="left:531px;top:1049px;width:22px;height:21px;background:#49021f;border-radius:4px"></div><div class="t" style="left:536px;top:1053.49px;font-size:13px;color:#ff3d6e;font-weight:bold">Id</div><svg style="left:579px;top:1047px;" width="25" height="25" viewBox="0 0 25 25"><path d="M0.5 7.5 L4 5 L4 20 L0.5 17.5 Z" fill="#8552cc"/><path d="M0.5 17.5 L4 20 L18 8 L18 1 Z" fill="#7b4bc0"/><path d="M0.5 7.5 L4 5 L18 17 L18 24 Z" fill="#a879ea"/><path d="M18 1 L24.5 4.2 L24.5 20.8 L18 24 Z" fill="#d39ffc"/><path d="M4 10 L7.2 12.5 L4 15 Z" fill="#2f2a24"/></svg><svg style="left:628px;top:1047px;" width="25" height="25" viewBox="0 0 25 25"><defs><linearGradient id="ed1" x1="0.15" y1="0.1" x2="0.95" y2="0.75"><stop offset="0" stop-color="#2aa6f2"/><stop offset="0.5" stop-color="#2fc6c0"/><stop offset="1" stop-color="#6fe05a"/></linearGradient><linearGradient id="ed2" x1="0" y1="0.2" x2="0.5" y2="1"><stop offset="0" stop-color="#1d86de"/><stop offset="1" stop-color="#0e5cab"/></linearGradient></defs><circle cx="12.5" cy="12.5" r="12" fill="url(#ed1)"/><path d="M0.6 13.5 Q1.5 7.5 8 7 Q13.5 6.8 15.5 10.5 Q13 9.8 11.2 12 Q10.2 15 13.5 16.8 Q18.5 18.5 24.3 16 A12 12 0 0 1 0.6 13.5 Z" fill="url(#ed2)"/><path d="M14.5 17.6 Q19.5 19.6 24.3 17" fill="none" stroke="#2f2a24" stroke-width="1.5"/><ellipse cx="13.6" cy="12.9" rx="2.2" ry="2" fill="#2f2a24"/></svg><svg style="left:677px;top:1050px;" width="23" height="20" viewBox="0 0 23 20"><path d="M1 1 H9.5 L11 3 H22 V18.5 H1 Z" fill="#f0b429"/><path d="M1 3.5 H22 V18.5 H1 Z" fill="#ffd86a"/><path d="M5 11 H18 V19 H14.5 V14.5 H8.5 V19 H5 Z" fill="#3a8fe6"/></svg><div class="a" style="left:669px;top:1078px;width:40px;height:2px;background:#76b9ed"></div><svg style="left:1722px;top:1056px;" width="14" height="8" viewBox="0 0 14 8"><path d="M1 7 L7 1 L13 7" fill="none" stroke="#ffffff" stroke-width="1.3"/></svg><svg style="left:1747px;top:1051px;" width="13" height="19" viewBox="0 0 13 19"><path d="M3 2.5 Q6.5 0.5 10 2.5 M3 16.5 Q6.5 18.5 10 16.5" fill="none" stroke="#ffffff" stroke-width="1.1"/><rect x="1" y="6" width="7" height="7" rx="1" fill="none" stroke="#ffffff" stroke-width="1.3"/><path d="M8.5 8.5 L11.5 6.5 V12.5 L8.5 10.5" fill="none" stroke="#ffffff" stroke-width="1.1"/></svg><div class="t" style="left:1772px;top:1055.02px;font-size:11.2px;color:#ffffff;">РУС</div><div class="t" style="left:1820px;top:1046.19px;font-size:11px;color:#ffffff;">20:26</div><div class="t" style="left:1807px;top:1064.19px;font-size:11px;color:#ffffff;">23.01.2025</div><svg style="left:1878px;top:1051px;" width="18" height="18" viewBox="0 0 18 18"><path d="M1 1 H17 V13 H11 L9 15.5 L7 13 H1 Z" fill="none" stroke="#ffffff" stroke-width="1.2"/></svg><div class="a" style="left:1915px;top:1040px;width:1px;height:40px;background:#5a5550"></div></body></html>
